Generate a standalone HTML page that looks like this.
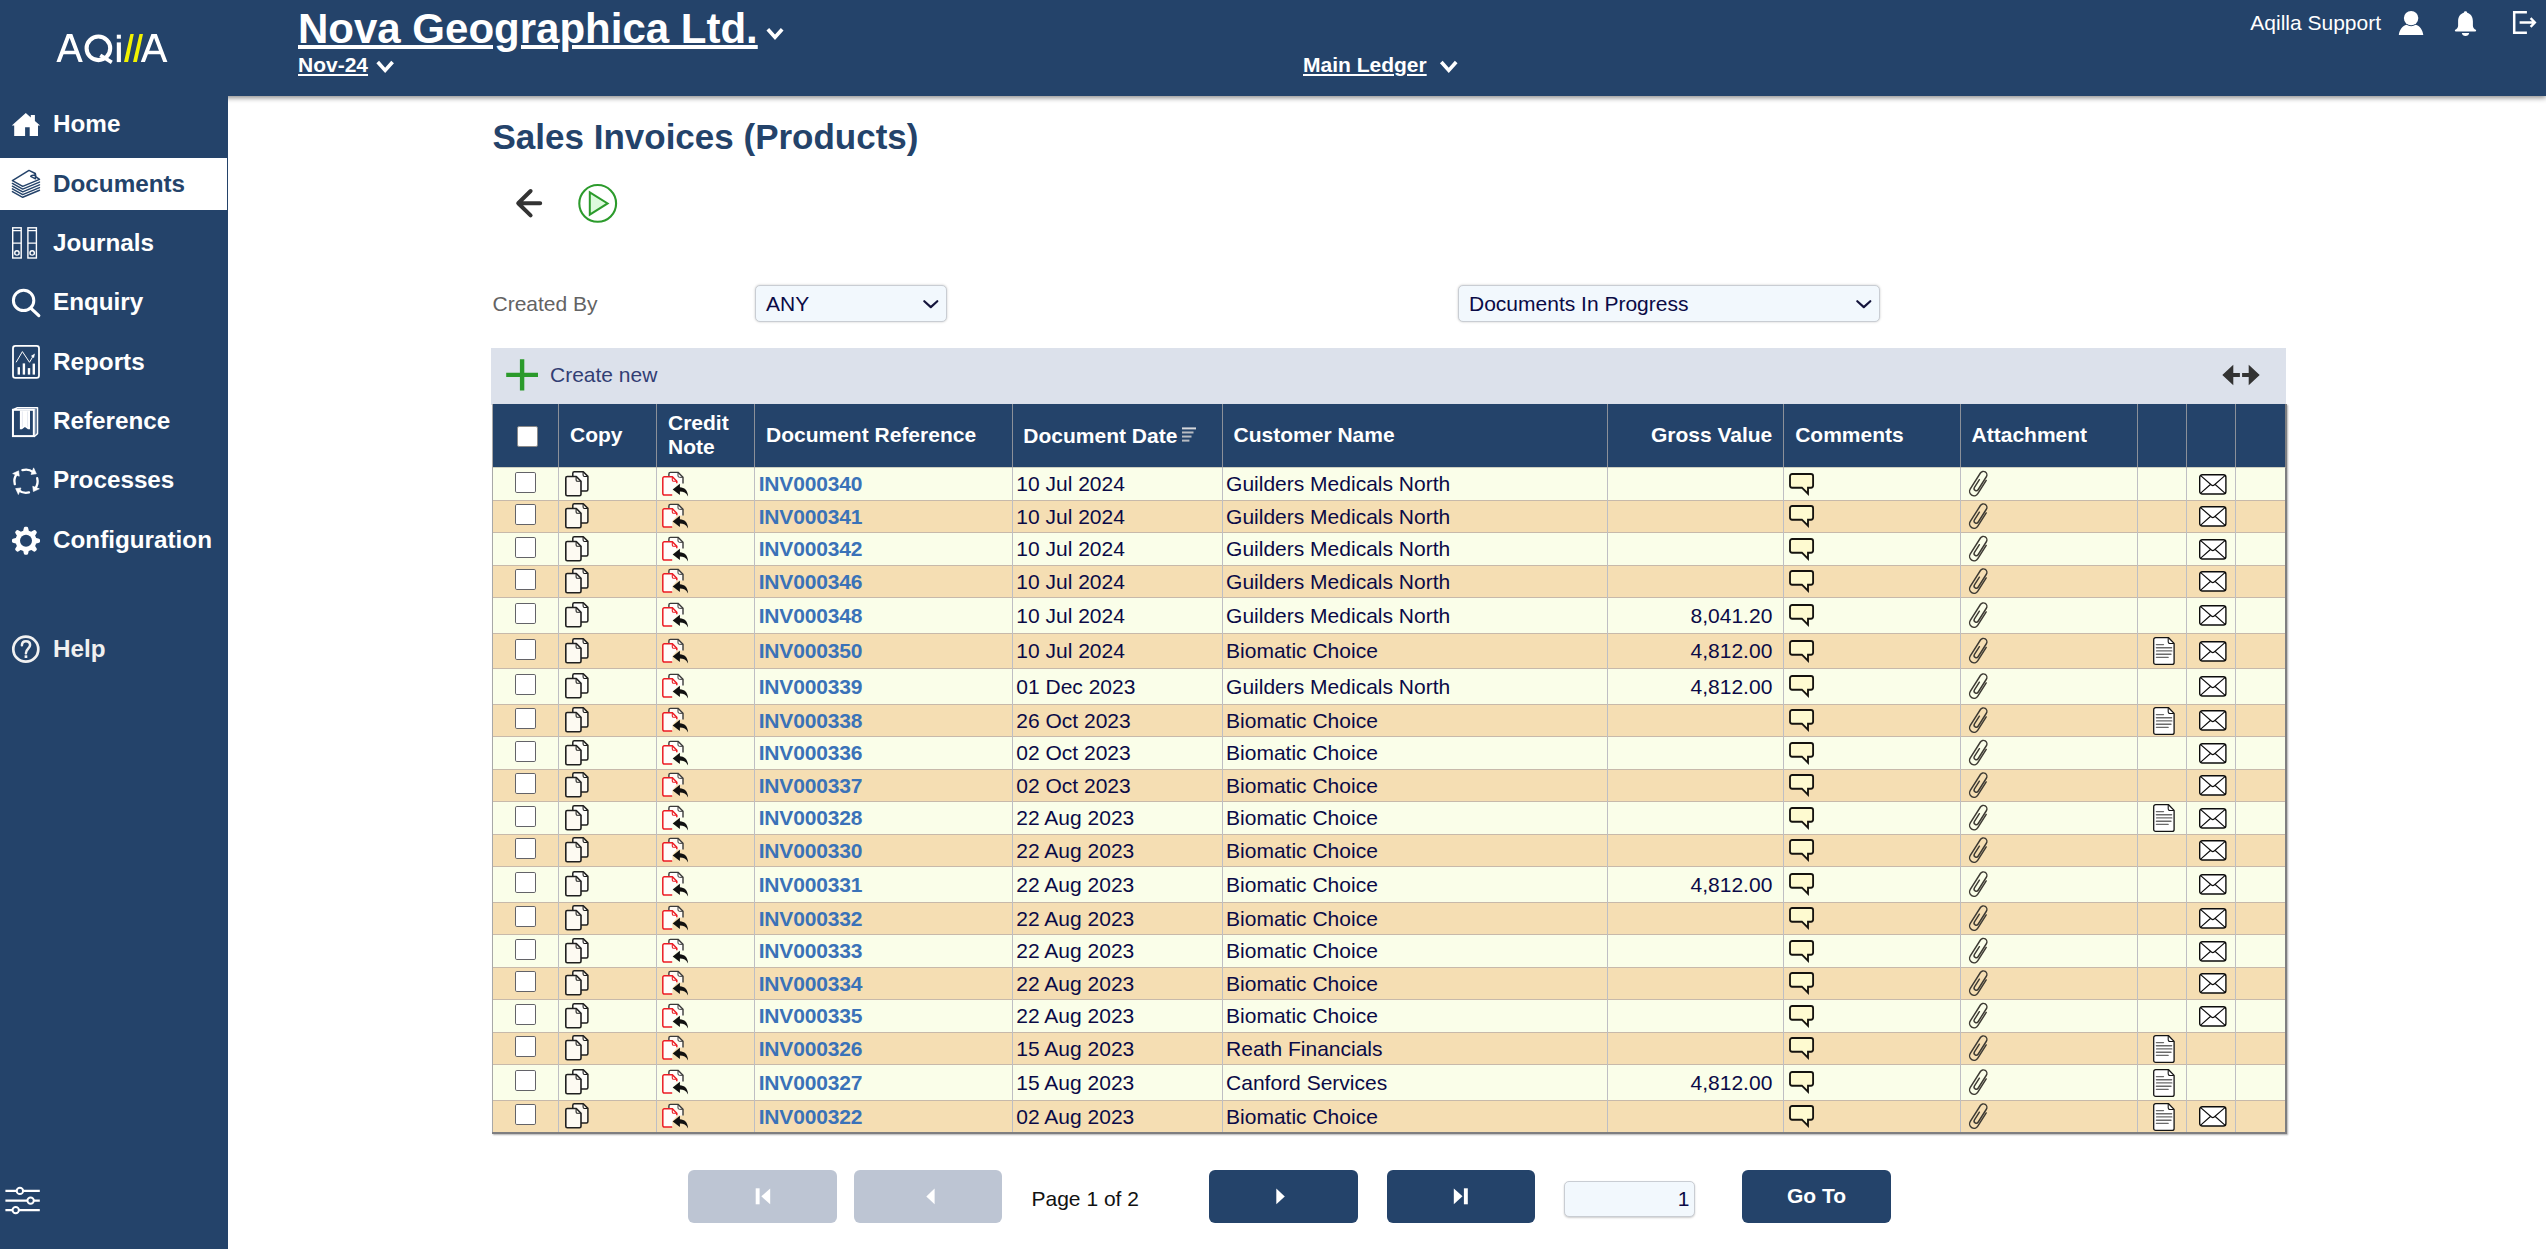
<!DOCTYPE html><html><head><meta charset="utf-8"><title>Sales Invoices (Products)</title><style>
*{box-sizing:border-box;margin:0;padding:0}
html,body{width:2546px;height:1249px;overflow:hidden;background:#fff}
body{font-family:"Liberation Sans",sans-serif;font-size:21px;color:#0a0a46;position:relative}
.abs{position:absolute}
svg{position:absolute;overflow:visible}
#top{position:absolute;left:0;top:0;width:2546px;height:96px;background:#24436a;box-shadow:0 2px 5px rgba(0,0,0,.45)}
#side{position:absolute;left:0;top:0;width:228px;height:1249px;background:#24436a}
.t{position:absolute;white-space:nowrap;line-height:1}
.w{color:#fff}
.b{font-weight:bold}
.u{text-decoration:underline}
.nav{position:absolute;left:53px;font-size:24.25px;font-weight:bold;color:#fff;line-height:1;white-space:nowrap}
.sel{position:absolute;height:36.5px;background:#f2f8fd;border:1px solid #c9cdd3;border-radius:5px;box-shadow:0 0 2.5px rgba(0,0,0,.22)}
.sel span{position:absolute;left:10px;top:7px;line-height:1;color:#0a0a46}
#tb{position:absolute;left:491px;top:348px;width:1795px;height:57px;background:#dce1eb}
#th{position:absolute;left:492px;top:404px;width:1793.5px;height:63px;background:#24436a}
#tbl{position:absolute;left:492px;top:404px;width:1794.6px;height:730px;box-shadow:1px 1px 1.5px rgba(0,0,0,.3)}
.r{position:absolute;left:492px;width:1793.5px}
.r.a{background:#fafee9}
.r.o{background:#f5deb3}
.vl{position:absolute;width:1px;background:#bebec3}
.hl{position:absolute;height:1px;background:#c7b9aa;left:492px;width:1793.5px}
.hd{position:absolute;color:#fff;font-weight:bold;white-space:nowrap;line-height:1}
.c{position:absolute;white-space:nowrap;line-height:1}
.ref{font-weight:bold;color:#3a72b8;letter-spacing:-.17px}
.cb{position:absolute;width:20.7px;height:20.7px;background:#fff;border:1.4px solid #636368;border-radius:1.8px}
.btn{position:absolute;top:1170px;height:52.5px;border-radius:6px;background:#24436a}
.btn.d{background:#bdc5d3}
</style></head><body>
<div id="top"></div>
<div class="t w b u" style="left:298px;top:8px;font-size:42px;text-decoration-thickness:3.9px;text-underline-offset:1.9px">Nova Geographica Ltd.</div>
<svg style="left:0;top:0" width="2546" height="1249" viewBox="0 0 2546 1249"><path d="M767.80 29.20 l7.20 8.00 l7.20 -8.00" fill="none" stroke="#fff" stroke-width="3.6" stroke-linecap="butt" stroke-linejoin="miter"/></svg>
<div class="t w b u" style="left:298px;top:54px;font-size:21px;text-decoration-thickness:1.8px;text-underline-offset:2px">Nov-24</div>
<svg style="left:0;top:0" width="2546" height="1249" viewBox="0 0 2546 1249"><path d="M377.70 62.00 l7.45 8.40 l7.45 -8.40" fill="none" stroke="#fff" stroke-width="3.6" stroke-linecap="butt" stroke-linejoin="miter"/></svg>
<div class="t w b u" style="left:1303px;top:54px;font-size:21px;text-decoration-thickness:1.8px;text-underline-offset:2px">Main Ledger</div>
<svg style="left:0;top:0" width="2546" height="1249" viewBox="0 0 2546 1249"><path d="M1441.30 62.00 l7.45 8.40 l7.45 -8.40" fill="none" stroke="#fff" stroke-width="3.6" stroke-linecap="butt" stroke-linejoin="miter"/></svg>
<div class="t w" style="left:2250.3px;top:12px;font-size:21px">Aqilla Support</div>
<svg style="left:0;top:0" width="2546" height="1249" viewBox="0 0 2546 1249"><circle cx="2411.1" cy="18.1" r="7.2" fill="#fff"/><path d="M2398.8 35.1 C2399.5 29.5 2402.5 26 2406.5 24.8 C2409.3 26.6 2412.9 26.6 2415.7 24.8 C2419.7 26 2422.6 29.5 2423.3 35.1Z" fill="#fff"/></svg>
<svg style="left:0;top:0" width="2546" height="1249" viewBox="0 0 2546 1249"><path d="M2465.5 11.2 c1.1 0 1.7 .6 1.7 1.5 c3.7 1 5.7 4.4 5.7 8.6 v4.4 c0 1.8 1.3 3.2 3.2 4.3 v.6 a1 1 0 0 1 -1 1 h-19.2 a1 1 0 0 1 -1 -1 v-.6 c1.9 -1.1 3.2 -2.5 3.2 -4.3 v-4.4 c0 -4.2 2 -7.6 5.7 -8.6 c0 -.9 .6 -1.5 1.7 -1.5z" fill="#fff"/><path d="M2461.8 33.1 h7.4 c-.3 1.8 -1.7 2.9 -3.7 2.9 s-3.4 -1.1 -3.7 -2.9z" fill="#fff"/></svg>
<svg style="left:0;top:0" width="2546" height="1249" viewBox="0 0 2546 1249"><path d="M2526.9 12.3 H2514.2 V32.8 H2526.9" fill="none" stroke="#fff" stroke-width="2.5"/><path d="M2519.6 22.5 H2534.2 M2530.6 18.1 L2534.9 22.5 L2530.6 26.9" fill="none" stroke="#fff" stroke-width="2.3"/></svg>
<div id="side"></div>
<svg style="left:0;top:0" width="2546" height="1249" viewBox="0 0 2546 1249"><defs><clipPath id="lc"><rect x="50" y="34.1" width="130" height="28"/></clipPath></defs><g clip-path="url(#lc)" fill="none" stroke="#fff" stroke-width="3.9"><path d="M58.1 63 L69.6 32.4 L81.1 63" stroke-linejoin="bevel"/><path d="M142.5 63 L154.1 32.4 L165.7 63" stroke-linejoin="bevel"/></g><path d="M63 52.5 H76.4 M147.4 52.5 H161" stroke="#fff" stroke-width="3.6" fill="none"/><circle cx="98.4" cy="48.3" r="11.8" fill="none" stroke="#fff" stroke-width="4.1"/><path d="M100.3 55.2 L111.8 62.4" stroke="#fff" stroke-width="3.6" fill="none"/><rect x="116.8" y="34.7" width="4.1" height="4" fill="#fff"/><rect x="116.8" y="42.4" width="4.1" height="19.7" fill="#fff"/><path d="M124 62.1 L130.4 34.1 L133.8 34.1 L128.1 62.1Z M133 62.1 L139.5 34.1 L143 34.1 L136.9 62.1Z" fill="#f2f200"/></svg>
<div class="abs" style="left:0;top:157.5px;width:227px;height:52.6px;background:#fff"></div>
<div class="nav" style="top:112px">Home</div>
<div class="nav" style="top:172px;color:#24436a">Documents</div>
<div class="nav" style="top:231px">Journals</div>
<div class="nav" style="top:290px">Enquiry</div>
<div class="nav" style="top:350px">Reports</div>
<div class="nav" style="top:409px">Reference</div>
<div class="nav" style="top:468px">Processes</div>
<div class="nav" style="top:528px">Configuration</div>
<div class="nav" style="top:637px;color:#f0f0f0">Help</div>
<svg style="left:0;top:0" width="2546" height="1249" viewBox="0 0 2546 1249"><path d="M25.8 112.9 L30.8 117.4 V115 H34.9 V121 L40.1 125.6 H38 V136 H29.7 V127.2 H25.1 V136 H14.2 V125.6 H11.8Z" fill="#fff"/><path d="M12.4 191.58 L22.7 197.28 L39.5 190.28" fill="none" stroke="#24436a" stroke-width="1.45" stroke-linejoin="round" stroke-linecap="round"/><path d="M12.4 188.86 L22.7 194.56 L39.5 187.56" fill="none" stroke="#24436a" stroke-width="1.45" stroke-linejoin="round" stroke-linecap="round"/><path d="M12.4 186.14 L22.7 191.84 L39.5 184.84" fill="none" stroke="#24436a" stroke-width="1.45" stroke-linejoin="round" stroke-linecap="round"/><path d="M12.4 183.42 L22.7 189.12 L39.5 182.12" fill="none" stroke="#24436a" stroke-width="1.45" stroke-linejoin="round" stroke-linecap="round"/><path d="M12.4 180.7 L29 170.4 L35.3 173.5 L35.7 176.6 L39.5 179.4 L22.7 186.4Z" fill="#fff" stroke="#24436a" stroke-width="1.5" stroke-linejoin="round"/><path d="M35.3 173.5 L35.5 178.8 L30.7 176.4 C31.2 175.3 32.6 175 35.1 175" fill="none" stroke="#24436a" stroke-width="1.4" stroke-linejoin="round"/><path d="M34.2 173.3 L35.6 173.6 L35.6 175.2Z" fill="#24436a" stroke="#24436a" stroke-width=".8"/><rect x="12.70" y="227.8" width="8.5" height="30.2" fill="none" stroke="#fff" stroke-width="1.4"/><path d="M12.70 230.6 h8.5 M12.70 243.1 h8.5" stroke="#fff" stroke-width="1.3"/><circle cx="16.95" cy="252.9" r="2.2" fill="none" stroke="#fff" stroke-width="1.4"/><rect x="27.90" y="227.8" width="8.5" height="30.2" fill="none" stroke="#fff" stroke-width="1.4"/><path d="M27.90 230.6 h8.5 M27.90 243.1 h8.5" stroke="#fff" stroke-width="1.3"/><circle cx="32.15" cy="252.9" r="2.2" fill="none" stroke="#fff" stroke-width="1.4"/><circle cx="23.6" cy="300.4" r="10.2" fill="none" stroke="#fff" stroke-width="3"/><path d="M31.3 308.6 L38.8 315.6" stroke="#fff" stroke-width="3.2" stroke-linecap="round"/><rect x="13" y="345.9" width="26" height="32" rx="2.4" fill="none" stroke="#fff" stroke-width="1.8"/><path d="M16.1 362.3 L22.4 351.6 L29.5 362.3 L33.4 355.6" fill="none" stroke="#fff" stroke-width="1"/><path d="M34.9 353.6 L34 358 L30.9 356Z" fill="#fff"/><rect x="17.60" y="367.20" width="2.4" height="7.40" fill="#fff"/><rect x="22.70" y="363.40" width="2.4" height="11.20" fill="#fff"/><rect x="27.80" y="368.10" width="2.4" height="6.50" fill="#fff"/><rect x="32.60" y="363.60" width="2.4" height="11.00" fill="#fff"/><path d="M13.2 409.6 L17.4 407.7 H37.5 V433.6 L34 436.8" fill="none" stroke="#fff" stroke-width="1.5" stroke-linejoin="round"/><path d="M17 408.9 H35.8 V434" fill="none" stroke="#9dadc6" stroke-width="1"/><rect x="12.95" y="409.8" width="20.9" height="26.3" fill="#24436a" stroke="#fff" stroke-width="2"/><path d="M19.9 410.4 H30 V429.3 L28 429.3 L24.95 427 L21.9 429.3 L19.9 429.3Z" fill="#fff"/><path d="M22.4 411.5 V427 M27.5 411.5 V427" stroke="#dfe5ee" stroke-width=".8"/><path d="M22.42 470.17 A11.60 11.60 0 0 1 33.14 472.06" fill="none" stroke="#fff" stroke-width="2.3" stroke-linecap="round"/><path d="M36.35 473.80 L33.62 467.87 L31.01 474.46Z" fill="#fff" stroke="#fff" stroke-width=".6" stroke-linejoin="round"/><path d="M37.20 478.20 A11.60 11.60 0 0 1 35.14 488.34" fill="none" stroke="#fff" stroke-width="2.3" stroke-linecap="round"/><path d="M33.40 491.55 L39.33 488.82 L32.74 486.21Z" fill="#fff" stroke="#fff" stroke-width=".6" stroke-linejoin="round"/><path d="M29.00 492.40 A11.60 11.60 0 0 1 18.86 490.34" fill="none" stroke="#fff" stroke-width="2.3" stroke-linecap="round"/><path d="M15.65 488.60 L18.38 494.53 L20.99 487.94Z" fill="#fff" stroke="#fff" stroke-width=".6" stroke-linejoin="round"/><path d="M14.80 484.20 A11.60 11.60 0 0 1 16.86 474.06" fill="none" stroke="#fff" stroke-width="2.3" stroke-linecap="round"/><path d="M18.60 470.85 L12.67 473.58 L19.26 476.19Z" fill="#fff" stroke="#fff" stroke-width=".6" stroke-linejoin="round"/><path d="M24.34 531.65 L25.24 528.12 L26.76 528.12 L27.66 531.65 L31.29 533.15 L34.43 531.30 L35.50 532.37 L33.65 535.51 L35.15 539.14 L38.68 540.04 L38.68 541.56 L35.15 542.46 L33.65 546.09 L35.50 549.23 L34.43 550.30 L31.29 548.45 L27.66 549.95 L26.76 553.48 L25.24 553.48 L24.34 549.95 L20.71 548.45 L17.57 550.30 L16.50 549.23 L18.35 546.09 L16.85 542.46 L13.32 541.56 L13.32 540.04 L16.85 539.14 L18.35 535.51 L16.50 532.37 L17.57 531.30 L20.71 533.15Z" fill="#fff" stroke="#fff" stroke-width="2.7" stroke-linejoin="round"/><circle cx="26.00" cy="540.80" r="6" fill="#24436a"/><circle cx="25.8" cy="649.2" r="12.5" fill="none" stroke="#f1f1f1" stroke-width="2.7"/><path d="M21.9 645.2 C22 642.7 23.6 641.2 25.9 641.2 C28.4 641.2 30.1 642.7 30.1 645 C30.1 648.5 25.9 648.9 25.9 653.2" fill="none" stroke="#f1f1f1" stroke-width="2.5" stroke-linecap="round"/><rect x="24.6" y="655.3" width="2.7" height="2.7" fill="#f1f1f1"/><path d="M5.4 1190.90 H39.8" stroke="#fff" stroke-width="2.2" stroke-linecap="butt"/><circle cx="19.90" cy="1190.90" r="3.2" fill="#24436a" stroke="#fff" stroke-width="2"/><path d="M5.4 1200.60 H39.8" stroke="#fff" stroke-width="2.2" stroke-linecap="butt"/><circle cx="30.60" cy="1200.60" r="3.2" fill="#24436a" stroke="#fff" stroke-width="2"/><path d="M5.4 1210.10 H39.8" stroke="#fff" stroke-width="2.2" stroke-linecap="butt"/><circle cx="15.70" cy="1210.10" r="3.2" fill="#24436a" stroke="#fff" stroke-width="2"/></svg>
<div class="t b" style="left:492.5px;top:119.00px;font-size:35px;color:#24436a">Sales Invoices (Products)</div>
<svg style="left:0;top:0" width="2546" height="1249" viewBox="0 0 2546 1249"><path d="M540.2 203.2 H519 M530.6 191 L518.2 203.2 L530.6 215.4" fill="none" stroke="#333" stroke-width="4" stroke-linecap="round" stroke-linejoin="round"/></svg>
<svg style="left:0;top:0" width="2546" height="1249" viewBox="0 0 2546 1249"><circle cx="597.7" cy="203.4" r="18.4" fill="#fff" stroke="#2c9b2c" stroke-width="2.1"/><path d="M589.8 192.3 L607.6 203.4 L589.8 214.6Z" fill="#dcfadc" stroke="#2c9b2c" stroke-width="2" stroke-linejoin="miter"/></svg>
<div class="t" style="left:492.5px;top:293.00px;color:#636363">Created By</div>
<div class="sel" style="left:755px;top:285px;width:191.8px"><span>ANY</span></div>
<svg style="left:0;top:0" width="2546" height="1249" viewBox="0 0 2546 1249"><path d="M924.30 301.20 l6.5 5.9 l6.5 -5.9" fill="none" stroke="#15153c" stroke-width="2.2" stroke-linecap="round" stroke-linejoin="round"/></svg>
<div class="sel" style="left:1458px;top:285px;width:422px"><span>Documents In Progress</span></div>
<svg style="left:0;top:0" width="2546" height="1249" viewBox="0 0 2546 1249"><path d="M1857.30 301.20 l6.5 5.9 l6.5 -5.9" fill="none" stroke="#15153c" stroke-width="2.2" stroke-linecap="round" stroke-linejoin="round"/></svg>
<div id="tb"></div>
<svg style="left:0;top:0" width="2546" height="1249" viewBox="0 0 2546 1249"><path d="M506.2 374.9 H538 M522.1 359.3 V390.5" stroke="#2b9a2b" stroke-width="4.4" stroke-linecap="butt"/></svg>
<div class="t" style="left:550px;top:364.00px;color:#323e74">Create new</div>
<svg style="left:0;top:0" width="2546" height="1249" viewBox="0 0 2546 1249"><path d="M2222.3 375 L2233.3 364.8 V372.9 H2248.7 V364.8 L2259.7 375 L2248.7 385.2 V377.1 H2233.3 V385.2Z" fill="#333"/><rect x="2239.9" y="371" width="2.2" height="8" fill="#dce1eb"/></svg>
<div id="tbl"></div>
<div id="th"></div>
<div class="r a" style="top:467px;height:33px"></div>
<div class="r o" style="top:500px;height:32px"></div>
<div class="r a" style="top:532px;height:33px"></div>
<div class="r o" style="top:565px;height:32px"></div>
<div class="r a" style="top:597px;height:36px"></div>
<div class="r o" style="top:633px;height:35px"></div>
<div class="r a" style="top:668px;height:36px"></div>
<div class="r o" style="top:704px;height:32px"></div>
<div class="r a" style="top:736px;height:33px"></div>
<div class="r o" style="top:769px;height:32px"></div>
<div class="r a" style="top:801px;height:33px"></div>
<div class="r o" style="top:834px;height:32px"></div>
<div class="r a" style="top:866px;height:36px"></div>
<div class="r o" style="top:902px;height:32px"></div>
<div class="r a" style="top:934px;height:33px"></div>
<div class="r o" style="top:967px;height:32px"></div>
<div class="r a" style="top:999px;height:33px"></div>
<div class="r o" style="top:1032px;height:32px"></div>
<div class="r a" style="top:1064px;height:36px"></div>
<div class="r o" style="top:1100px;height:32px"></div>
<div class="hl" style="top:500px"></div>
<div class="hl" style="top:532px"></div>
<div class="hl" style="top:565px"></div>
<div class="hl" style="top:597px"></div>
<div class="hl" style="top:633px"></div>
<div class="hl" style="top:668px"></div>
<div class="hl" style="top:704px"></div>
<div class="hl" style="top:736px"></div>
<div class="hl" style="top:769px"></div>
<div class="hl" style="top:801px"></div>
<div class="hl" style="top:834px"></div>
<div class="hl" style="top:866px"></div>
<div class="hl" style="top:902px"></div>
<div class="hl" style="top:934px"></div>
<div class="hl" style="top:967px"></div>
<div class="hl" style="top:999px"></div>
<div class="hl" style="top:1032px"></div>
<div class="hl" style="top:1064px"></div>
<div class="hl" style="top:1100px"></div>
<div class="vl" style="left:558px;top:404px;height:728px"></div>
<div class="vl" style="left:656px;top:404px;height:728px"></div>
<div class="vl" style="left:754px;top:404px;height:728px"></div>
<div class="vl" style="left:1012px;top:404px;height:728px"></div>
<div class="vl" style="left:1222px;top:404px;height:728px"></div>
<div class="vl" style="left:1607px;top:404px;height:728px"></div>
<div class="vl" style="left:1783px;top:404px;height:728px"></div>
<div class="vl" style="left:1960px;top:404px;height:728px"></div>
<div class="vl" style="left:2137px;top:404px;height:728px"></div>
<div class="vl" style="left:2186px;top:404px;height:728px"></div>
<div class="vl" style="left:2235px;top:404px;height:728px"></div>
<div class="vl" style="left:557.8px;top:404px;height:63px;background:#8b9099;width:1.7px"></div>
<div class="vl" style="left:655.8px;top:404px;height:63px;background:#8b9099;width:1.7px"></div>
<div class="vl" style="left:753.8px;top:404px;height:63px;background:#8b9099;width:1.7px"></div>
<div class="vl" style="left:1011.8px;top:404px;height:63px;background:#8b9099;width:1.7px"></div>
<div class="vl" style="left:1221.8px;top:404px;height:63px;background:#8b9099;width:1.7px"></div>
<div class="vl" style="left:1606.8px;top:404px;height:63px;background:#8b9099;width:1.7px"></div>
<div class="vl" style="left:1782.8px;top:404px;height:63px;background:#8b9099;width:1.7px"></div>
<div class="vl" style="left:1959.8px;top:404px;height:63px;background:#8b9099;width:1.7px"></div>
<div class="vl" style="left:2136.8px;top:404px;height:63px;background:#8b9099;width:1.7px"></div>
<div class="vl" style="left:2185.8px;top:404px;height:63px;background:#8b9099;width:1.7px"></div>
<div class="vl" style="left:2234.8px;top:404px;height:63px;background:#8b9099;width:1.7px"></div>
<div class="vl" style="left:492px;top:404px;height:729px;background:#a8a8a8;width:1px"></div>
<div class="vl" style="left:2284.5px;top:404px;height:730px;background:#7e7e80;width:2.1px"></div>
<div class="hl" style="top:1132.2px;background:#7e7e80;height:1.9px;width:1794.5px"></div>
<div class="hl" style="top:466.5px;background:rgba(170,170,160,.55)"></div>
<div class="abs" style="left:517.2px;top:426.3px;width:21px;height:20.8px;background:#fff;border:1px solid #8a8a8a;border-radius:2px"></div>
<div class="hd" style="left:570.00px;top:424.00px">Copy</div>
<div class="hd" style="left:668.00px;top:412.00px">Credit</div>
<div class="hd" style="left:668.00px;top:436.00px">Note</div>
<div class="hd" style="left:766.00px;top:424.00px">Document Reference</div>
<div class="hd" style="left:1023.30px;top:425.00px">Document Date</div>
<svg style="left:0;top:0" width="2546" height="1249" viewBox="0 0 2546 1249"><rect x="1182" y="427.40" width="14.00" height="2" fill="#d6d8dc"/><rect x="1182" y="431.47" width="11.50" height="2" fill="#b9bcc2"/><rect x="1182" y="435.54" width="9.50" height="2" fill="#b9bcc2"/><rect x="1182" y="439.61" width="7.40" height="2" fill="#b9bcc2"/></svg>
<div class="hd" style="left:1233.60px;top:424.00px">Customer Name</div>
<div class="hd" style="right:773.70px;top:424.00px">Gross Value</div>
<div class="hd" style="left:1795.20px;top:424.00px">Comments</div>
<div class="hd" style="left:1971.60px;top:424.00px">Attachment</div>
<div class="cb" style="left:515.2px;top:472.10px"></div>
<svg style="left:565.20px;top:471.20px" width="24" height="26" viewBox="0 0 24 26"><path d="M9.3 .8 H18.3 L22.9 5.4 V18.4 a1.5 1.5 0 0 1 -1.5 1.5 H9.3 a1.5 1.5 0 0 1 -1.5 -1.5 V2.3 a1.5 1.5 0 0 1 1.5 -1.5Z" fill="rgba(255,255,255,.82)" stroke="#1f1f1f" stroke-width="1.5" stroke-linejoin="round"/><path d="M18.1 1 V4.1 a1.4 1.4 0 0 0 1.4 1.4 H22.7" fill="none" stroke="#1f1f1f" stroke-width="1.1"/><path d="M2.3 5.5 H11.3 L16 10.2 V23.3 a1.5 1.5 0 0 1 -1.5 1.5 H2.3 a1.5 1.5 0 0 1 -1.5 -1.5 V7 a1.5 1.5 0 0 1 1.5 -1.5Z" fill="#fdfaf2" stroke="#1f1f1f" stroke-width="1.6" stroke-linejoin="round"/><path d="M11.1 5.7 V8.9 a1.4 1.4 0 0 0 1.4 1.4 H15.8" fill="none" stroke="#1f1f1f" stroke-width="1.1"/></svg>
<svg style="left:662.00px;top:471.00px" width="27" height="26" viewBox="0 0 27 26"><path d="M6.9 5.4 V2.9 a1.5 1.5 0 0 1 1.5 -1.5 H16.2 L21 6.2 V12.6 H12 Z" fill="rgba(255,255,255,.85)" stroke="none"/><path d="M6.9 5.2 V2.9 a1.5 1.5 0 0 1 1.5 -1.5 H16.2 L21 6.2 V12.6" fill="none" stroke="#3a3a3a" stroke-width="1.4"/><path d="M16 1.6 V4.9 a1.4 1.4 0 0 0 1.4 1.4 H20.8" fill="none" stroke="#3a3a3a" stroke-width="1"/><path d="M10.4 24.1 H2.3 a1.5 1.5 0 0 1 -1.5 -1.5 V7.3 a1.5 1.5 0 0 1 1.5 -1.5 H10.4 L14.8 10.2 V13 L10.4 18 Z" fill="#fffdfb" stroke="none"/><path d="M10.2 24.1 H2.3 a1.5 1.5 0 0 1 -1.5 -1.5 V7.3 a1.5 1.5 0 0 1 1.5 -1.5 H10.4 L14.8 10.2 V12.2" fill="none" stroke="#ec1c24" stroke-width="1.5"/><path d="M10.3 6 V8.9 a1.4 1.4 0 0 0 1.4 1.4 H14.6" fill="none" stroke="#ec1c24" stroke-width="1.1"/><path d="M10.7 18.4 L17.9 12.7 V16.2 C22.4 16.4 25.8 19.2 26.1 25.4 C24.2 21.8 21.6 20.6 17.9 20.6 V24.1Z" fill="#111"/></svg>
<div class="c ref" style="left:758.7px;top:473px">INV000340</div>
<div class="c" style="left:1016.3px;top:473px">10 Jul 2024</div>
<div class="c" style="left:1226.1px;top:473px">Guilders Medicals North</div>
<svg style="left:1789.00px;top:473.00px" width="26" height="24" viewBox="0 0 26 24"><path d="M3.2 1 H21.9 a2.2 2.2 0 0 1 2.2 2.2 V12.5 a2.2 2.2 0 0 1 -2.2 2.2 H19 V20.7 L12.9 14.7 H3.2 a2.2 2.2 0 0 1 -2.2 -2.2 V3.2 a2.2 2.2 0 0 1 2.2 -2.2Z" fill="#fefad0" stroke="#15130f" stroke-width="1.85" stroke-linejoin="miter"/></svg>
<svg style="left:0;top:0" width="2546" height="1249" viewBox="0 0 2546 1249"><path transform="translate(1977.00 478.40) rotate(32.4)" d="M2.7 -.2 V9.0 A2.15 2.15 0 0 0 7.0 9.0 V-6.4 A3.5 3.5 0 0 0 0 -6.4 V12.5 A4.45 4.45 0 0 0 8.9 12.5 V-3.2" fill="none" stroke="#3d3a33" stroke-width="1.45" stroke-linecap="round"/></svg>
<svg style="left:2199.10px;top:474.05px" width="28" height="21" viewBox="0 0 28 21"><rect x=".7" y=".7" width="26.2" height="19.3" rx="2.6" fill="#fff" stroke="#0c0c0c" stroke-width="1.4"/><path d="M1.4 1.4 L12.4 11 Q13.8 12.2 15.2 11 L26.2 1.4 M1.4 19.4 L11.4 10.5 M26.2 19.4 L16.2 10.5" fill="none" stroke="#0c0c0c" stroke-width="1.15"/></svg>
<div class="cb" style="left:515.2px;top:504.10px"></div>
<svg style="left:565.20px;top:503.20px" width="24" height="26" viewBox="0 0 24 26"><path d="M9.3 .8 H18.3 L22.9 5.4 V18.4 a1.5 1.5 0 0 1 -1.5 1.5 H9.3 a1.5 1.5 0 0 1 -1.5 -1.5 V2.3 a1.5 1.5 0 0 1 1.5 -1.5Z" fill="rgba(255,255,255,.82)" stroke="#1f1f1f" stroke-width="1.5" stroke-linejoin="round"/><path d="M18.1 1 V4.1 a1.4 1.4 0 0 0 1.4 1.4 H22.7" fill="none" stroke="#1f1f1f" stroke-width="1.1"/><path d="M2.3 5.5 H11.3 L16 10.2 V23.3 a1.5 1.5 0 0 1 -1.5 1.5 H2.3 a1.5 1.5 0 0 1 -1.5 -1.5 V7 a1.5 1.5 0 0 1 1.5 -1.5Z" fill="#fdfaf2" stroke="#1f1f1f" stroke-width="1.6" stroke-linejoin="round"/><path d="M11.1 5.7 V8.9 a1.4 1.4 0 0 0 1.4 1.4 H15.8" fill="none" stroke="#1f1f1f" stroke-width="1.1"/></svg>
<svg style="left:662.00px;top:503.00px" width="27" height="26" viewBox="0 0 27 26"><path d="M6.9 5.4 V2.9 a1.5 1.5 0 0 1 1.5 -1.5 H16.2 L21 6.2 V12.6 H12 Z" fill="rgba(255,255,255,.85)" stroke="none"/><path d="M6.9 5.2 V2.9 a1.5 1.5 0 0 1 1.5 -1.5 H16.2 L21 6.2 V12.6" fill="none" stroke="#3a3a3a" stroke-width="1.4"/><path d="M16 1.6 V4.9 a1.4 1.4 0 0 0 1.4 1.4 H20.8" fill="none" stroke="#3a3a3a" stroke-width="1"/><path d="M10.4 24.1 H2.3 a1.5 1.5 0 0 1 -1.5 -1.5 V7.3 a1.5 1.5 0 0 1 1.5 -1.5 H10.4 L14.8 10.2 V13 L10.4 18 Z" fill="#fffdfb" stroke="none"/><path d="M10.2 24.1 H2.3 a1.5 1.5 0 0 1 -1.5 -1.5 V7.3 a1.5 1.5 0 0 1 1.5 -1.5 H10.4 L14.8 10.2 V12.2" fill="none" stroke="#ec1c24" stroke-width="1.5"/><path d="M10.3 6 V8.9 a1.4 1.4 0 0 0 1.4 1.4 H14.6" fill="none" stroke="#ec1c24" stroke-width="1.1"/><path d="M10.7 18.4 L17.9 12.7 V16.2 C22.4 16.4 25.8 19.2 26.1 25.4 C24.2 21.8 21.6 20.6 17.9 20.6 V24.1Z" fill="#111"/></svg>
<div class="c ref" style="left:758.7px;top:506px">INV000341</div>
<div class="c" style="left:1016.3px;top:506px">10 Jul 2024</div>
<div class="c" style="left:1226.1px;top:506px">Guilders Medicals North</div>
<svg style="left:1789.00px;top:505.00px" width="26" height="24" viewBox="0 0 26 24"><path d="M3.2 1 H21.9 a2.2 2.2 0 0 1 2.2 2.2 V12.5 a2.2 2.2 0 0 1 -2.2 2.2 H19 V20.7 L12.9 14.7 H3.2 a2.2 2.2 0 0 1 -2.2 -2.2 V3.2 a2.2 2.2 0 0 1 2.2 -2.2Z" fill="#fefad0" stroke="#15130f" stroke-width="1.85" stroke-linejoin="miter"/></svg>
<svg style="left:0;top:0" width="2546" height="1249" viewBox="0 0 2546 1249"><path transform="translate(1977.00 510.90) rotate(32.4)" d="M2.7 -.2 V9.0 A2.15 2.15 0 0 0 7.0 9.0 V-6.4 A3.5 3.5 0 0 0 0 -6.4 V12.5 A4.45 4.45 0 0 0 8.9 12.5 V-3.2" fill="none" stroke="#3d3a33" stroke-width="1.45" stroke-linecap="round"/></svg>
<svg style="left:2199.10px;top:506.05px" width="28" height="21" viewBox="0 0 28 21"><rect x=".7" y=".7" width="26.2" height="19.3" rx="2.6" fill="#fff" stroke="#0c0c0c" stroke-width="1.4"/><path d="M1.4 1.4 L12.4 11 Q13.8 12.2 15.2 11 L26.2 1.4 M1.4 19.4 L11.4 10.5 M26.2 19.4 L16.2 10.5" fill="none" stroke="#0c0c0c" stroke-width="1.15"/></svg>
<div class="cb" style="left:515.2px;top:537.10px"></div>
<svg style="left:565.20px;top:536.20px" width="24" height="26" viewBox="0 0 24 26"><path d="M9.3 .8 H18.3 L22.9 5.4 V18.4 a1.5 1.5 0 0 1 -1.5 1.5 H9.3 a1.5 1.5 0 0 1 -1.5 -1.5 V2.3 a1.5 1.5 0 0 1 1.5 -1.5Z" fill="rgba(255,255,255,.82)" stroke="#1f1f1f" stroke-width="1.5" stroke-linejoin="round"/><path d="M18.1 1 V4.1 a1.4 1.4 0 0 0 1.4 1.4 H22.7" fill="none" stroke="#1f1f1f" stroke-width="1.1"/><path d="M2.3 5.5 H11.3 L16 10.2 V23.3 a1.5 1.5 0 0 1 -1.5 1.5 H2.3 a1.5 1.5 0 0 1 -1.5 -1.5 V7 a1.5 1.5 0 0 1 1.5 -1.5Z" fill="#fdfaf2" stroke="#1f1f1f" stroke-width="1.6" stroke-linejoin="round"/><path d="M11.1 5.7 V8.9 a1.4 1.4 0 0 0 1.4 1.4 H15.8" fill="none" stroke="#1f1f1f" stroke-width="1.1"/></svg>
<svg style="left:662.00px;top:536.00px" width="27" height="26" viewBox="0 0 27 26"><path d="M6.9 5.4 V2.9 a1.5 1.5 0 0 1 1.5 -1.5 H16.2 L21 6.2 V12.6 H12 Z" fill="rgba(255,255,255,.85)" stroke="none"/><path d="M6.9 5.2 V2.9 a1.5 1.5 0 0 1 1.5 -1.5 H16.2 L21 6.2 V12.6" fill="none" stroke="#3a3a3a" stroke-width="1.4"/><path d="M16 1.6 V4.9 a1.4 1.4 0 0 0 1.4 1.4 H20.8" fill="none" stroke="#3a3a3a" stroke-width="1"/><path d="M10.4 24.1 H2.3 a1.5 1.5 0 0 1 -1.5 -1.5 V7.3 a1.5 1.5 0 0 1 1.5 -1.5 H10.4 L14.8 10.2 V13 L10.4 18 Z" fill="#fffdfb" stroke="none"/><path d="M10.2 24.1 H2.3 a1.5 1.5 0 0 1 -1.5 -1.5 V7.3 a1.5 1.5 0 0 1 1.5 -1.5 H10.4 L14.8 10.2 V12.2" fill="none" stroke="#ec1c24" stroke-width="1.5"/><path d="M10.3 6 V8.9 a1.4 1.4 0 0 0 1.4 1.4 H14.6" fill="none" stroke="#ec1c24" stroke-width="1.1"/><path d="M10.7 18.4 L17.9 12.7 V16.2 C22.4 16.4 25.8 19.2 26.1 25.4 C24.2 21.8 21.6 20.6 17.9 20.6 V24.1Z" fill="#111"/></svg>
<div class="c ref" style="left:758.7px;top:538px">INV000342</div>
<div class="c" style="left:1016.3px;top:538px">10 Jul 2024</div>
<div class="c" style="left:1226.1px;top:538px">Guilders Medicals North</div>
<svg style="left:1789.00px;top:538.00px" width="26" height="24" viewBox="0 0 26 24"><path d="M3.2 1 H21.9 a2.2 2.2 0 0 1 2.2 2.2 V12.5 a2.2 2.2 0 0 1 -2.2 2.2 H19 V20.7 L12.9 14.7 H3.2 a2.2 2.2 0 0 1 -2.2 -2.2 V3.2 a2.2 2.2 0 0 1 2.2 -2.2Z" fill="#fefad0" stroke="#15130f" stroke-width="1.85" stroke-linejoin="miter"/></svg>
<svg style="left:0;top:0" width="2546" height="1249" viewBox="0 0 2546 1249"><path transform="translate(1977.00 543.40) rotate(32.4)" d="M2.7 -.2 V9.0 A2.15 2.15 0 0 0 7.0 9.0 V-6.4 A3.5 3.5 0 0 0 0 -6.4 V12.5 A4.45 4.45 0 0 0 8.9 12.5 V-3.2" fill="none" stroke="#3d3a33" stroke-width="1.45" stroke-linecap="round"/></svg>
<svg style="left:2199.10px;top:539.05px" width="28" height="21" viewBox="0 0 28 21"><rect x=".7" y=".7" width="26.2" height="19.3" rx="2.6" fill="#fff" stroke="#0c0c0c" stroke-width="1.4"/><path d="M1.4 1.4 L12.4 11 Q13.8 12.2 15.2 11 L26.2 1.4 M1.4 19.4 L11.4 10.5 M26.2 19.4 L16.2 10.5" fill="none" stroke="#0c0c0c" stroke-width="1.15"/></svg>
<div class="cb" style="left:515.2px;top:569.10px"></div>
<svg style="left:565.20px;top:568.20px" width="24" height="26" viewBox="0 0 24 26"><path d="M9.3 .8 H18.3 L22.9 5.4 V18.4 a1.5 1.5 0 0 1 -1.5 1.5 H9.3 a1.5 1.5 0 0 1 -1.5 -1.5 V2.3 a1.5 1.5 0 0 1 1.5 -1.5Z" fill="rgba(255,255,255,.82)" stroke="#1f1f1f" stroke-width="1.5" stroke-linejoin="round"/><path d="M18.1 1 V4.1 a1.4 1.4 0 0 0 1.4 1.4 H22.7" fill="none" stroke="#1f1f1f" stroke-width="1.1"/><path d="M2.3 5.5 H11.3 L16 10.2 V23.3 a1.5 1.5 0 0 1 -1.5 1.5 H2.3 a1.5 1.5 0 0 1 -1.5 -1.5 V7 a1.5 1.5 0 0 1 1.5 -1.5Z" fill="#fdfaf2" stroke="#1f1f1f" stroke-width="1.6" stroke-linejoin="round"/><path d="M11.1 5.7 V8.9 a1.4 1.4 0 0 0 1.4 1.4 H15.8" fill="none" stroke="#1f1f1f" stroke-width="1.1"/></svg>
<svg style="left:662.00px;top:568.00px" width="27" height="26" viewBox="0 0 27 26"><path d="M6.9 5.4 V2.9 a1.5 1.5 0 0 1 1.5 -1.5 H16.2 L21 6.2 V12.6 H12 Z" fill="rgba(255,255,255,.85)" stroke="none"/><path d="M6.9 5.2 V2.9 a1.5 1.5 0 0 1 1.5 -1.5 H16.2 L21 6.2 V12.6" fill="none" stroke="#3a3a3a" stroke-width="1.4"/><path d="M16 1.6 V4.9 a1.4 1.4 0 0 0 1.4 1.4 H20.8" fill="none" stroke="#3a3a3a" stroke-width="1"/><path d="M10.4 24.1 H2.3 a1.5 1.5 0 0 1 -1.5 -1.5 V7.3 a1.5 1.5 0 0 1 1.5 -1.5 H10.4 L14.8 10.2 V13 L10.4 18 Z" fill="#fffdfb" stroke="none"/><path d="M10.2 24.1 H2.3 a1.5 1.5 0 0 1 -1.5 -1.5 V7.3 a1.5 1.5 0 0 1 1.5 -1.5 H10.4 L14.8 10.2 V12.2" fill="none" stroke="#ec1c24" stroke-width="1.5"/><path d="M10.3 6 V8.9 a1.4 1.4 0 0 0 1.4 1.4 H14.6" fill="none" stroke="#ec1c24" stroke-width="1.1"/><path d="M10.7 18.4 L17.9 12.7 V16.2 C22.4 16.4 25.8 19.2 26.1 25.4 C24.2 21.8 21.6 20.6 17.9 20.6 V24.1Z" fill="#111"/></svg>
<div class="c ref" style="left:758.7px;top:571px">INV000346</div>
<div class="c" style="left:1016.3px;top:571px">10 Jul 2024</div>
<div class="c" style="left:1226.1px;top:571px">Guilders Medicals North</div>
<svg style="left:1789.00px;top:570.00px" width="26" height="24" viewBox="0 0 26 24"><path d="M3.2 1 H21.9 a2.2 2.2 0 0 1 2.2 2.2 V12.5 a2.2 2.2 0 0 1 -2.2 2.2 H19 V20.7 L12.9 14.7 H3.2 a2.2 2.2 0 0 1 -2.2 -2.2 V3.2 a2.2 2.2 0 0 1 2.2 -2.2Z" fill="#fefad0" stroke="#15130f" stroke-width="1.85" stroke-linejoin="miter"/></svg>
<svg style="left:0;top:0" width="2546" height="1249" viewBox="0 0 2546 1249"><path transform="translate(1977.00 575.90) rotate(32.4)" d="M2.7 -.2 V9.0 A2.15 2.15 0 0 0 7.0 9.0 V-6.4 A3.5 3.5 0 0 0 0 -6.4 V12.5 A4.45 4.45 0 0 0 8.9 12.5 V-3.2" fill="none" stroke="#3d3a33" stroke-width="1.45" stroke-linecap="round"/></svg>
<svg style="left:2199.10px;top:571.05px" width="28" height="21" viewBox="0 0 28 21"><rect x=".7" y=".7" width="26.2" height="19.3" rx="2.6" fill="#fff" stroke="#0c0c0c" stroke-width="1.4"/><path d="M1.4 1.4 L12.4 11 Q13.8 12.2 15.2 11 L26.2 1.4 M1.4 19.4 L11.4 10.5 M26.2 19.4 L16.2 10.5" fill="none" stroke="#0c0c0c" stroke-width="1.15"/></svg>
<div class="cb" style="left:515.2px;top:603.10px"></div>
<svg style="left:565.20px;top:602.20px" width="24" height="26" viewBox="0 0 24 26"><path d="M9.3 .8 H18.3 L22.9 5.4 V18.4 a1.5 1.5 0 0 1 -1.5 1.5 H9.3 a1.5 1.5 0 0 1 -1.5 -1.5 V2.3 a1.5 1.5 0 0 1 1.5 -1.5Z" fill="rgba(255,255,255,.82)" stroke="#1f1f1f" stroke-width="1.5" stroke-linejoin="round"/><path d="M18.1 1 V4.1 a1.4 1.4 0 0 0 1.4 1.4 H22.7" fill="none" stroke="#1f1f1f" stroke-width="1.1"/><path d="M2.3 5.5 H11.3 L16 10.2 V23.3 a1.5 1.5 0 0 1 -1.5 1.5 H2.3 a1.5 1.5 0 0 1 -1.5 -1.5 V7 a1.5 1.5 0 0 1 1.5 -1.5Z" fill="#fdfaf2" stroke="#1f1f1f" stroke-width="1.6" stroke-linejoin="round"/><path d="M11.1 5.7 V8.9 a1.4 1.4 0 0 0 1.4 1.4 H15.8" fill="none" stroke="#1f1f1f" stroke-width="1.1"/></svg>
<svg style="left:662.00px;top:602.00px" width="27" height="26" viewBox="0 0 27 26"><path d="M6.9 5.4 V2.9 a1.5 1.5 0 0 1 1.5 -1.5 H16.2 L21 6.2 V12.6 H12 Z" fill="rgba(255,255,255,.85)" stroke="none"/><path d="M6.9 5.2 V2.9 a1.5 1.5 0 0 1 1.5 -1.5 H16.2 L21 6.2 V12.6" fill="none" stroke="#3a3a3a" stroke-width="1.4"/><path d="M16 1.6 V4.9 a1.4 1.4 0 0 0 1.4 1.4 H20.8" fill="none" stroke="#3a3a3a" stroke-width="1"/><path d="M10.4 24.1 H2.3 a1.5 1.5 0 0 1 -1.5 -1.5 V7.3 a1.5 1.5 0 0 1 1.5 -1.5 H10.4 L14.8 10.2 V13 L10.4 18 Z" fill="#fffdfb" stroke="none"/><path d="M10.2 24.1 H2.3 a1.5 1.5 0 0 1 -1.5 -1.5 V7.3 a1.5 1.5 0 0 1 1.5 -1.5 H10.4 L14.8 10.2 V12.2" fill="none" stroke="#ec1c24" stroke-width="1.5"/><path d="M10.3 6 V8.9 a1.4 1.4 0 0 0 1.4 1.4 H14.6" fill="none" stroke="#ec1c24" stroke-width="1.1"/><path d="M10.7 18.4 L17.9 12.7 V16.2 C22.4 16.4 25.8 19.2 26.1 25.4 C24.2 21.8 21.6 20.6 17.9 20.6 V24.1Z" fill="#111"/></svg>
<div class="c ref" style="left:758.7px;top:605px">INV000348</div>
<div class="c" style="left:1016.3px;top:605px">10 Jul 2024</div>
<div class="c" style="left:1226.1px;top:605px">Guilders Medicals North</div>
<div class="c" style="right:773.70px;top:605px">8,041.20</div>
<svg style="left:1789.00px;top:604.00px" width="26" height="24" viewBox="0 0 26 24"><path d="M3.2 1 H21.9 a2.2 2.2 0 0 1 2.2 2.2 V12.5 a2.2 2.2 0 0 1 -2.2 2.2 H19 V20.7 L12.9 14.7 H3.2 a2.2 2.2 0 0 1 -2.2 -2.2 V3.2 a2.2 2.2 0 0 1 2.2 -2.2Z" fill="#fefad0" stroke="#15130f" stroke-width="1.85" stroke-linejoin="miter"/></svg>
<svg style="left:0;top:0" width="2546" height="1249" viewBox="0 0 2546 1249"><path transform="translate(1977.00 609.90) rotate(32.4)" d="M2.7 -.2 V9.0 A2.15 2.15 0 0 0 7.0 9.0 V-6.4 A3.5 3.5 0 0 0 0 -6.4 V12.5 A4.45 4.45 0 0 0 8.9 12.5 V-3.2" fill="none" stroke="#3d3a33" stroke-width="1.45" stroke-linecap="round"/></svg>
<svg style="left:2199.10px;top:605.05px" width="28" height="21" viewBox="0 0 28 21"><rect x=".7" y=".7" width="26.2" height="19.3" rx="2.6" fill="#fff" stroke="#0c0c0c" stroke-width="1.4"/><path d="M1.4 1.4 L12.4 11 Q13.8 12.2 15.2 11 L26.2 1.4 M1.4 19.4 L11.4 10.5 M26.2 19.4 L16.2 10.5" fill="none" stroke="#0c0c0c" stroke-width="1.15"/></svg>
<div class="cb" style="left:515.2px;top:639.10px"></div>
<svg style="left:565.20px;top:638.20px" width="24" height="26" viewBox="0 0 24 26"><path d="M9.3 .8 H18.3 L22.9 5.4 V18.4 a1.5 1.5 0 0 1 -1.5 1.5 H9.3 a1.5 1.5 0 0 1 -1.5 -1.5 V2.3 a1.5 1.5 0 0 1 1.5 -1.5Z" fill="rgba(255,255,255,.82)" stroke="#1f1f1f" stroke-width="1.5" stroke-linejoin="round"/><path d="M18.1 1 V4.1 a1.4 1.4 0 0 0 1.4 1.4 H22.7" fill="none" stroke="#1f1f1f" stroke-width="1.1"/><path d="M2.3 5.5 H11.3 L16 10.2 V23.3 a1.5 1.5 0 0 1 -1.5 1.5 H2.3 a1.5 1.5 0 0 1 -1.5 -1.5 V7 a1.5 1.5 0 0 1 1.5 -1.5Z" fill="#fdfaf2" stroke="#1f1f1f" stroke-width="1.6" stroke-linejoin="round"/><path d="M11.1 5.7 V8.9 a1.4 1.4 0 0 0 1.4 1.4 H15.8" fill="none" stroke="#1f1f1f" stroke-width="1.1"/></svg>
<svg style="left:662.00px;top:638.00px" width="27" height="26" viewBox="0 0 27 26"><path d="M6.9 5.4 V2.9 a1.5 1.5 0 0 1 1.5 -1.5 H16.2 L21 6.2 V12.6 H12 Z" fill="rgba(255,255,255,.85)" stroke="none"/><path d="M6.9 5.2 V2.9 a1.5 1.5 0 0 1 1.5 -1.5 H16.2 L21 6.2 V12.6" fill="none" stroke="#3a3a3a" stroke-width="1.4"/><path d="M16 1.6 V4.9 a1.4 1.4 0 0 0 1.4 1.4 H20.8" fill="none" stroke="#3a3a3a" stroke-width="1"/><path d="M10.4 24.1 H2.3 a1.5 1.5 0 0 1 -1.5 -1.5 V7.3 a1.5 1.5 0 0 1 1.5 -1.5 H10.4 L14.8 10.2 V13 L10.4 18 Z" fill="#fffdfb" stroke="none"/><path d="M10.2 24.1 H2.3 a1.5 1.5 0 0 1 -1.5 -1.5 V7.3 a1.5 1.5 0 0 1 1.5 -1.5 H10.4 L14.8 10.2 V12.2" fill="none" stroke="#ec1c24" stroke-width="1.5"/><path d="M10.3 6 V8.9 a1.4 1.4 0 0 0 1.4 1.4 H14.6" fill="none" stroke="#ec1c24" stroke-width="1.1"/><path d="M10.7 18.4 L17.9 12.7 V16.2 C22.4 16.4 25.8 19.2 26.1 25.4 C24.2 21.8 21.6 20.6 17.9 20.6 V24.1Z" fill="#111"/></svg>
<div class="c ref" style="left:758.7px;top:640px">INV000350</div>
<div class="c" style="left:1016.3px;top:640px">10 Jul 2024</div>
<div class="c" style="left:1226.1px;top:640px">Biomatic Choice</div>
<div class="c" style="right:773.70px;top:640px">4,812.00</div>
<svg style="left:1789.00px;top:640.00px" width="26" height="24" viewBox="0 0 26 24"><path d="M3.2 1 H21.9 a2.2 2.2 0 0 1 2.2 2.2 V12.5 a2.2 2.2 0 0 1 -2.2 2.2 H19 V20.7 L12.9 14.7 H3.2 a2.2 2.2 0 0 1 -2.2 -2.2 V3.2 a2.2 2.2 0 0 1 2.2 -2.2Z" fill="#fefad0" stroke="#15130f" stroke-width="1.85" stroke-linejoin="miter"/></svg>
<svg style="left:0;top:0" width="2546" height="1249" viewBox="0 0 2546 1249"><path transform="translate(1977.00 645.40) rotate(32.4)" d="M2.7 -.2 V9.0 A2.15 2.15 0 0 0 7.0 9.0 V-6.4 A3.5 3.5 0 0 0 0 -6.4 V12.5 A4.45 4.45 0 0 0 8.9 12.5 V-3.2" fill="none" stroke="#3d3a33" stroke-width="1.45" stroke-linecap="round"/></svg>
<svg style="left:2153.10px;top:637.00px" width="22" height="29" viewBox="0 0 22 29"><path d="M2.7 .7 H15.6 L21.1 6.4 V25.4 a2 2 0 0 1 -2 2 H2.7 a2 2 0 0 1 -2 -2 V2.7 a2 2 0 0 1 2 -2Z" fill="#fff" stroke="#141414" stroke-width="1.3" stroke-linejoin="round"/><path d="M15.2 1 V4.8 a1.7 1.7 0 0 0 1.7 1.7 H20.9" fill="none" stroke="#141414" stroke-width="1.1"/><path d="M3.4 7.6 H10.5 M3.4 10.7 H18.6 M3.6 13.9 H18.8 M3.4 17.2 H18 M3.4 20.3 H15.2" stroke="#6a6a6a" stroke-width="1.35" stroke-linecap="round"/></svg>
<svg style="left:2199.10px;top:641.05px" width="28" height="21" viewBox="0 0 28 21"><rect x=".7" y=".7" width="26.2" height="19.3" rx="2.6" fill="#fff" stroke="#0c0c0c" stroke-width="1.4"/><path d="M1.4 1.4 L12.4 11 Q13.8 12.2 15.2 11 L26.2 1.4 M1.4 19.4 L11.4 10.5 M26.2 19.4 L16.2 10.5" fill="none" stroke="#0c0c0c" stroke-width="1.15"/></svg>
<div class="cb" style="left:515.2px;top:674.10px"></div>
<svg style="left:565.20px;top:673.20px" width="24" height="26" viewBox="0 0 24 26"><path d="M9.3 .8 H18.3 L22.9 5.4 V18.4 a1.5 1.5 0 0 1 -1.5 1.5 H9.3 a1.5 1.5 0 0 1 -1.5 -1.5 V2.3 a1.5 1.5 0 0 1 1.5 -1.5Z" fill="rgba(255,255,255,.82)" stroke="#1f1f1f" stroke-width="1.5" stroke-linejoin="round"/><path d="M18.1 1 V4.1 a1.4 1.4 0 0 0 1.4 1.4 H22.7" fill="none" stroke="#1f1f1f" stroke-width="1.1"/><path d="M2.3 5.5 H11.3 L16 10.2 V23.3 a1.5 1.5 0 0 1 -1.5 1.5 H2.3 a1.5 1.5 0 0 1 -1.5 -1.5 V7 a1.5 1.5 0 0 1 1.5 -1.5Z" fill="#fdfaf2" stroke="#1f1f1f" stroke-width="1.6" stroke-linejoin="round"/><path d="M11.1 5.7 V8.9 a1.4 1.4 0 0 0 1.4 1.4 H15.8" fill="none" stroke="#1f1f1f" stroke-width="1.1"/></svg>
<svg style="left:662.00px;top:673.00px" width="27" height="26" viewBox="0 0 27 26"><path d="M6.9 5.4 V2.9 a1.5 1.5 0 0 1 1.5 -1.5 H16.2 L21 6.2 V12.6 H12 Z" fill="rgba(255,255,255,.85)" stroke="none"/><path d="M6.9 5.2 V2.9 a1.5 1.5 0 0 1 1.5 -1.5 H16.2 L21 6.2 V12.6" fill="none" stroke="#3a3a3a" stroke-width="1.4"/><path d="M16 1.6 V4.9 a1.4 1.4 0 0 0 1.4 1.4 H20.8" fill="none" stroke="#3a3a3a" stroke-width="1"/><path d="M10.4 24.1 H2.3 a1.5 1.5 0 0 1 -1.5 -1.5 V7.3 a1.5 1.5 0 0 1 1.5 -1.5 H10.4 L14.8 10.2 V13 L10.4 18 Z" fill="#fffdfb" stroke="none"/><path d="M10.2 24.1 H2.3 a1.5 1.5 0 0 1 -1.5 -1.5 V7.3 a1.5 1.5 0 0 1 1.5 -1.5 H10.4 L14.8 10.2 V12.2" fill="none" stroke="#ec1c24" stroke-width="1.5"/><path d="M10.3 6 V8.9 a1.4 1.4 0 0 0 1.4 1.4 H14.6" fill="none" stroke="#ec1c24" stroke-width="1.1"/><path d="M10.7 18.4 L17.9 12.7 V16.2 C22.4 16.4 25.8 19.2 26.1 25.4 C24.2 21.8 21.6 20.6 17.9 20.6 V24.1Z" fill="#111"/></svg>
<div class="c ref" style="left:758.7px;top:676px">INV000339</div>
<div class="c" style="left:1016.3px;top:676px">01 Dec 2023</div>
<div class="c" style="left:1226.1px;top:676px">Guilders Medicals North</div>
<div class="c" style="right:773.70px;top:676px">4,812.00</div>
<svg style="left:1789.00px;top:675.00px" width="26" height="24" viewBox="0 0 26 24"><path d="M3.2 1 H21.9 a2.2 2.2 0 0 1 2.2 2.2 V12.5 a2.2 2.2 0 0 1 -2.2 2.2 H19 V20.7 L12.9 14.7 H3.2 a2.2 2.2 0 0 1 -2.2 -2.2 V3.2 a2.2 2.2 0 0 1 2.2 -2.2Z" fill="#fefad0" stroke="#15130f" stroke-width="1.85" stroke-linejoin="miter"/></svg>
<svg style="left:0;top:0" width="2546" height="1249" viewBox="0 0 2546 1249"><path transform="translate(1977.00 680.90) rotate(32.4)" d="M2.7 -.2 V9.0 A2.15 2.15 0 0 0 7.0 9.0 V-6.4 A3.5 3.5 0 0 0 0 -6.4 V12.5 A4.45 4.45 0 0 0 8.9 12.5 V-3.2" fill="none" stroke="#3d3a33" stroke-width="1.45" stroke-linecap="round"/></svg>
<svg style="left:2199.10px;top:676.05px" width="28" height="21" viewBox="0 0 28 21"><rect x=".7" y=".7" width="26.2" height="19.3" rx="2.6" fill="#fff" stroke="#0c0c0c" stroke-width="1.4"/><path d="M1.4 1.4 L12.4 11 Q13.8 12.2 15.2 11 L26.2 1.4 M1.4 19.4 L11.4 10.5 M26.2 19.4 L16.2 10.5" fill="none" stroke="#0c0c0c" stroke-width="1.15"/></svg>
<div class="cb" style="left:515.2px;top:708.10px"></div>
<svg style="left:565.20px;top:707.20px" width="24" height="26" viewBox="0 0 24 26"><path d="M9.3 .8 H18.3 L22.9 5.4 V18.4 a1.5 1.5 0 0 1 -1.5 1.5 H9.3 a1.5 1.5 0 0 1 -1.5 -1.5 V2.3 a1.5 1.5 0 0 1 1.5 -1.5Z" fill="rgba(255,255,255,.82)" stroke="#1f1f1f" stroke-width="1.5" stroke-linejoin="round"/><path d="M18.1 1 V4.1 a1.4 1.4 0 0 0 1.4 1.4 H22.7" fill="none" stroke="#1f1f1f" stroke-width="1.1"/><path d="M2.3 5.5 H11.3 L16 10.2 V23.3 a1.5 1.5 0 0 1 -1.5 1.5 H2.3 a1.5 1.5 0 0 1 -1.5 -1.5 V7 a1.5 1.5 0 0 1 1.5 -1.5Z" fill="#fdfaf2" stroke="#1f1f1f" stroke-width="1.6" stroke-linejoin="round"/><path d="M11.1 5.7 V8.9 a1.4 1.4 0 0 0 1.4 1.4 H15.8" fill="none" stroke="#1f1f1f" stroke-width="1.1"/></svg>
<svg style="left:662.00px;top:707.00px" width="27" height="26" viewBox="0 0 27 26"><path d="M6.9 5.4 V2.9 a1.5 1.5 0 0 1 1.5 -1.5 H16.2 L21 6.2 V12.6 H12 Z" fill="rgba(255,255,255,.85)" stroke="none"/><path d="M6.9 5.2 V2.9 a1.5 1.5 0 0 1 1.5 -1.5 H16.2 L21 6.2 V12.6" fill="none" stroke="#3a3a3a" stroke-width="1.4"/><path d="M16 1.6 V4.9 a1.4 1.4 0 0 0 1.4 1.4 H20.8" fill="none" stroke="#3a3a3a" stroke-width="1"/><path d="M10.4 24.1 H2.3 a1.5 1.5 0 0 1 -1.5 -1.5 V7.3 a1.5 1.5 0 0 1 1.5 -1.5 H10.4 L14.8 10.2 V13 L10.4 18 Z" fill="#fffdfb" stroke="none"/><path d="M10.2 24.1 H2.3 a1.5 1.5 0 0 1 -1.5 -1.5 V7.3 a1.5 1.5 0 0 1 1.5 -1.5 H10.4 L14.8 10.2 V12.2" fill="none" stroke="#ec1c24" stroke-width="1.5"/><path d="M10.3 6 V8.9 a1.4 1.4 0 0 0 1.4 1.4 H14.6" fill="none" stroke="#ec1c24" stroke-width="1.1"/><path d="M10.7 18.4 L17.9 12.7 V16.2 C22.4 16.4 25.8 19.2 26.1 25.4 C24.2 21.8 21.6 20.6 17.9 20.6 V24.1Z" fill="#111"/></svg>
<div class="c ref" style="left:758.7px;top:710px">INV000338</div>
<div class="c" style="left:1016.3px;top:710px">26 Oct 2023</div>
<div class="c" style="left:1226.1px;top:710px">Biomatic Choice</div>
<svg style="left:1789.00px;top:709.00px" width="26" height="24" viewBox="0 0 26 24"><path d="M3.2 1 H21.9 a2.2 2.2 0 0 1 2.2 2.2 V12.5 a2.2 2.2 0 0 1 -2.2 2.2 H19 V20.7 L12.9 14.7 H3.2 a2.2 2.2 0 0 1 -2.2 -2.2 V3.2 a2.2 2.2 0 0 1 2.2 -2.2Z" fill="#fefad0" stroke="#15130f" stroke-width="1.85" stroke-linejoin="miter"/></svg>
<svg style="left:0;top:0" width="2546" height="1249" viewBox="0 0 2546 1249"><path transform="translate(1977.00 714.90) rotate(32.4)" d="M2.7 -.2 V9.0 A2.15 2.15 0 0 0 7.0 9.0 V-6.4 A3.5 3.5 0 0 0 0 -6.4 V12.5 A4.45 4.45 0 0 0 8.9 12.5 V-3.2" fill="none" stroke="#3d3a33" stroke-width="1.45" stroke-linecap="round"/></svg>
<svg style="left:2153.10px;top:707.00px" width="22" height="29" viewBox="0 0 22 29"><path d="M2.7 .7 H15.6 L21.1 6.4 V25.4 a2 2 0 0 1 -2 2 H2.7 a2 2 0 0 1 -2 -2 V2.7 a2 2 0 0 1 2 -2Z" fill="#fff" stroke="#141414" stroke-width="1.3" stroke-linejoin="round"/><path d="M15.2 1 V4.8 a1.7 1.7 0 0 0 1.7 1.7 H20.9" fill="none" stroke="#141414" stroke-width="1.1"/><path d="M3.4 7.6 H10.5 M3.4 10.7 H18.6 M3.6 13.9 H18.8 M3.4 17.2 H18 M3.4 20.3 H15.2" stroke="#6a6a6a" stroke-width="1.35" stroke-linecap="round"/></svg>
<svg style="left:2199.10px;top:710.05px" width="28" height="21" viewBox="0 0 28 21"><rect x=".7" y=".7" width="26.2" height="19.3" rx="2.6" fill="#fff" stroke="#0c0c0c" stroke-width="1.4"/><path d="M1.4 1.4 L12.4 11 Q13.8 12.2 15.2 11 L26.2 1.4 M1.4 19.4 L11.4 10.5 M26.2 19.4 L16.2 10.5" fill="none" stroke="#0c0c0c" stroke-width="1.15"/></svg>
<div class="cb" style="left:515.2px;top:741.10px"></div>
<svg style="left:565.20px;top:740.20px" width="24" height="26" viewBox="0 0 24 26"><path d="M9.3 .8 H18.3 L22.9 5.4 V18.4 a1.5 1.5 0 0 1 -1.5 1.5 H9.3 a1.5 1.5 0 0 1 -1.5 -1.5 V2.3 a1.5 1.5 0 0 1 1.5 -1.5Z" fill="rgba(255,255,255,.82)" stroke="#1f1f1f" stroke-width="1.5" stroke-linejoin="round"/><path d="M18.1 1 V4.1 a1.4 1.4 0 0 0 1.4 1.4 H22.7" fill="none" stroke="#1f1f1f" stroke-width="1.1"/><path d="M2.3 5.5 H11.3 L16 10.2 V23.3 a1.5 1.5 0 0 1 -1.5 1.5 H2.3 a1.5 1.5 0 0 1 -1.5 -1.5 V7 a1.5 1.5 0 0 1 1.5 -1.5Z" fill="#fdfaf2" stroke="#1f1f1f" stroke-width="1.6" stroke-linejoin="round"/><path d="M11.1 5.7 V8.9 a1.4 1.4 0 0 0 1.4 1.4 H15.8" fill="none" stroke="#1f1f1f" stroke-width="1.1"/></svg>
<svg style="left:662.00px;top:740.00px" width="27" height="26" viewBox="0 0 27 26"><path d="M6.9 5.4 V2.9 a1.5 1.5 0 0 1 1.5 -1.5 H16.2 L21 6.2 V12.6 H12 Z" fill="rgba(255,255,255,.85)" stroke="none"/><path d="M6.9 5.2 V2.9 a1.5 1.5 0 0 1 1.5 -1.5 H16.2 L21 6.2 V12.6" fill="none" stroke="#3a3a3a" stroke-width="1.4"/><path d="M16 1.6 V4.9 a1.4 1.4 0 0 0 1.4 1.4 H20.8" fill="none" stroke="#3a3a3a" stroke-width="1"/><path d="M10.4 24.1 H2.3 a1.5 1.5 0 0 1 -1.5 -1.5 V7.3 a1.5 1.5 0 0 1 1.5 -1.5 H10.4 L14.8 10.2 V13 L10.4 18 Z" fill="#fffdfb" stroke="none"/><path d="M10.2 24.1 H2.3 a1.5 1.5 0 0 1 -1.5 -1.5 V7.3 a1.5 1.5 0 0 1 1.5 -1.5 H10.4 L14.8 10.2 V12.2" fill="none" stroke="#ec1c24" stroke-width="1.5"/><path d="M10.3 6 V8.9 a1.4 1.4 0 0 0 1.4 1.4 H14.6" fill="none" stroke="#ec1c24" stroke-width="1.1"/><path d="M10.7 18.4 L17.9 12.7 V16.2 C22.4 16.4 25.8 19.2 26.1 25.4 C24.2 21.8 21.6 20.6 17.9 20.6 V24.1Z" fill="#111"/></svg>
<div class="c ref" style="left:758.7px;top:742px">INV000336</div>
<div class="c" style="left:1016.3px;top:742px">02 Oct 2023</div>
<div class="c" style="left:1226.1px;top:742px">Biomatic Choice</div>
<svg style="left:1789.00px;top:742.00px" width="26" height="24" viewBox="0 0 26 24"><path d="M3.2 1 H21.9 a2.2 2.2 0 0 1 2.2 2.2 V12.5 a2.2 2.2 0 0 1 -2.2 2.2 H19 V20.7 L12.9 14.7 H3.2 a2.2 2.2 0 0 1 -2.2 -2.2 V3.2 a2.2 2.2 0 0 1 2.2 -2.2Z" fill="#fefad0" stroke="#15130f" stroke-width="1.85" stroke-linejoin="miter"/></svg>
<svg style="left:0;top:0" width="2546" height="1249" viewBox="0 0 2546 1249"><path transform="translate(1977.00 747.40) rotate(32.4)" d="M2.7 -.2 V9.0 A2.15 2.15 0 0 0 7.0 9.0 V-6.4 A3.5 3.5 0 0 0 0 -6.4 V12.5 A4.45 4.45 0 0 0 8.9 12.5 V-3.2" fill="none" stroke="#3d3a33" stroke-width="1.45" stroke-linecap="round"/></svg>
<svg style="left:2199.10px;top:743.05px" width="28" height="21" viewBox="0 0 28 21"><rect x=".7" y=".7" width="26.2" height="19.3" rx="2.6" fill="#fff" stroke="#0c0c0c" stroke-width="1.4"/><path d="M1.4 1.4 L12.4 11 Q13.8 12.2 15.2 11 L26.2 1.4 M1.4 19.4 L11.4 10.5 M26.2 19.4 L16.2 10.5" fill="none" stroke="#0c0c0c" stroke-width="1.15"/></svg>
<div class="cb" style="left:515.2px;top:773.10px"></div>
<svg style="left:565.20px;top:772.20px" width="24" height="26" viewBox="0 0 24 26"><path d="M9.3 .8 H18.3 L22.9 5.4 V18.4 a1.5 1.5 0 0 1 -1.5 1.5 H9.3 a1.5 1.5 0 0 1 -1.5 -1.5 V2.3 a1.5 1.5 0 0 1 1.5 -1.5Z" fill="rgba(255,255,255,.82)" stroke="#1f1f1f" stroke-width="1.5" stroke-linejoin="round"/><path d="M18.1 1 V4.1 a1.4 1.4 0 0 0 1.4 1.4 H22.7" fill="none" stroke="#1f1f1f" stroke-width="1.1"/><path d="M2.3 5.5 H11.3 L16 10.2 V23.3 a1.5 1.5 0 0 1 -1.5 1.5 H2.3 a1.5 1.5 0 0 1 -1.5 -1.5 V7 a1.5 1.5 0 0 1 1.5 -1.5Z" fill="#fdfaf2" stroke="#1f1f1f" stroke-width="1.6" stroke-linejoin="round"/><path d="M11.1 5.7 V8.9 a1.4 1.4 0 0 0 1.4 1.4 H15.8" fill="none" stroke="#1f1f1f" stroke-width="1.1"/></svg>
<svg style="left:662.00px;top:772.00px" width="27" height="26" viewBox="0 0 27 26"><path d="M6.9 5.4 V2.9 a1.5 1.5 0 0 1 1.5 -1.5 H16.2 L21 6.2 V12.6 H12 Z" fill="rgba(255,255,255,.85)" stroke="none"/><path d="M6.9 5.2 V2.9 a1.5 1.5 0 0 1 1.5 -1.5 H16.2 L21 6.2 V12.6" fill="none" stroke="#3a3a3a" stroke-width="1.4"/><path d="M16 1.6 V4.9 a1.4 1.4 0 0 0 1.4 1.4 H20.8" fill="none" stroke="#3a3a3a" stroke-width="1"/><path d="M10.4 24.1 H2.3 a1.5 1.5 0 0 1 -1.5 -1.5 V7.3 a1.5 1.5 0 0 1 1.5 -1.5 H10.4 L14.8 10.2 V13 L10.4 18 Z" fill="#fffdfb" stroke="none"/><path d="M10.2 24.1 H2.3 a1.5 1.5 0 0 1 -1.5 -1.5 V7.3 a1.5 1.5 0 0 1 1.5 -1.5 H10.4 L14.8 10.2 V12.2" fill="none" stroke="#ec1c24" stroke-width="1.5"/><path d="M10.3 6 V8.9 a1.4 1.4 0 0 0 1.4 1.4 H14.6" fill="none" stroke="#ec1c24" stroke-width="1.1"/><path d="M10.7 18.4 L17.9 12.7 V16.2 C22.4 16.4 25.8 19.2 26.1 25.4 C24.2 21.8 21.6 20.6 17.9 20.6 V24.1Z" fill="#111"/></svg>
<div class="c ref" style="left:758.7px;top:775px">INV000337</div>
<div class="c" style="left:1016.3px;top:775px">02 Oct 2023</div>
<div class="c" style="left:1226.1px;top:775px">Biomatic Choice</div>
<svg style="left:1789.00px;top:774.00px" width="26" height="24" viewBox="0 0 26 24"><path d="M3.2 1 H21.9 a2.2 2.2 0 0 1 2.2 2.2 V12.5 a2.2 2.2 0 0 1 -2.2 2.2 H19 V20.7 L12.9 14.7 H3.2 a2.2 2.2 0 0 1 -2.2 -2.2 V3.2 a2.2 2.2 0 0 1 2.2 -2.2Z" fill="#fefad0" stroke="#15130f" stroke-width="1.85" stroke-linejoin="miter"/></svg>
<svg style="left:0;top:0" width="2546" height="1249" viewBox="0 0 2546 1249"><path transform="translate(1977.00 779.90) rotate(32.4)" d="M2.7 -.2 V9.0 A2.15 2.15 0 0 0 7.0 9.0 V-6.4 A3.5 3.5 0 0 0 0 -6.4 V12.5 A4.45 4.45 0 0 0 8.9 12.5 V-3.2" fill="none" stroke="#3d3a33" stroke-width="1.45" stroke-linecap="round"/></svg>
<svg style="left:2199.10px;top:775.05px" width="28" height="21" viewBox="0 0 28 21"><rect x=".7" y=".7" width="26.2" height="19.3" rx="2.6" fill="#fff" stroke="#0c0c0c" stroke-width="1.4"/><path d="M1.4 1.4 L12.4 11 Q13.8 12.2 15.2 11 L26.2 1.4 M1.4 19.4 L11.4 10.5 M26.2 19.4 L16.2 10.5" fill="none" stroke="#0c0c0c" stroke-width="1.15"/></svg>
<div class="cb" style="left:515.2px;top:806.10px"></div>
<svg style="left:565.20px;top:805.20px" width="24" height="26" viewBox="0 0 24 26"><path d="M9.3 .8 H18.3 L22.9 5.4 V18.4 a1.5 1.5 0 0 1 -1.5 1.5 H9.3 a1.5 1.5 0 0 1 -1.5 -1.5 V2.3 a1.5 1.5 0 0 1 1.5 -1.5Z" fill="rgba(255,255,255,.82)" stroke="#1f1f1f" stroke-width="1.5" stroke-linejoin="round"/><path d="M18.1 1 V4.1 a1.4 1.4 0 0 0 1.4 1.4 H22.7" fill="none" stroke="#1f1f1f" stroke-width="1.1"/><path d="M2.3 5.5 H11.3 L16 10.2 V23.3 a1.5 1.5 0 0 1 -1.5 1.5 H2.3 a1.5 1.5 0 0 1 -1.5 -1.5 V7 a1.5 1.5 0 0 1 1.5 -1.5Z" fill="#fdfaf2" stroke="#1f1f1f" stroke-width="1.6" stroke-linejoin="round"/><path d="M11.1 5.7 V8.9 a1.4 1.4 0 0 0 1.4 1.4 H15.8" fill="none" stroke="#1f1f1f" stroke-width="1.1"/></svg>
<svg style="left:662.00px;top:805.00px" width="27" height="26" viewBox="0 0 27 26"><path d="M6.9 5.4 V2.9 a1.5 1.5 0 0 1 1.5 -1.5 H16.2 L21 6.2 V12.6 H12 Z" fill="rgba(255,255,255,.85)" stroke="none"/><path d="M6.9 5.2 V2.9 a1.5 1.5 0 0 1 1.5 -1.5 H16.2 L21 6.2 V12.6" fill="none" stroke="#3a3a3a" stroke-width="1.4"/><path d="M16 1.6 V4.9 a1.4 1.4 0 0 0 1.4 1.4 H20.8" fill="none" stroke="#3a3a3a" stroke-width="1"/><path d="M10.4 24.1 H2.3 a1.5 1.5 0 0 1 -1.5 -1.5 V7.3 a1.5 1.5 0 0 1 1.5 -1.5 H10.4 L14.8 10.2 V13 L10.4 18 Z" fill="#fffdfb" stroke="none"/><path d="M10.2 24.1 H2.3 a1.5 1.5 0 0 1 -1.5 -1.5 V7.3 a1.5 1.5 0 0 1 1.5 -1.5 H10.4 L14.8 10.2 V12.2" fill="none" stroke="#ec1c24" stroke-width="1.5"/><path d="M10.3 6 V8.9 a1.4 1.4 0 0 0 1.4 1.4 H14.6" fill="none" stroke="#ec1c24" stroke-width="1.1"/><path d="M10.7 18.4 L17.9 12.7 V16.2 C22.4 16.4 25.8 19.2 26.1 25.4 C24.2 21.8 21.6 20.6 17.9 20.6 V24.1Z" fill="#111"/></svg>
<div class="c ref" style="left:758.7px;top:807px">INV000328</div>
<div class="c" style="left:1016.3px;top:807px">22 Aug 2023</div>
<div class="c" style="left:1226.1px;top:807px">Biomatic Choice</div>
<svg style="left:1789.00px;top:807.00px" width="26" height="24" viewBox="0 0 26 24"><path d="M3.2 1 H21.9 a2.2 2.2 0 0 1 2.2 2.2 V12.5 a2.2 2.2 0 0 1 -2.2 2.2 H19 V20.7 L12.9 14.7 H3.2 a2.2 2.2 0 0 1 -2.2 -2.2 V3.2 a2.2 2.2 0 0 1 2.2 -2.2Z" fill="#fefad0" stroke="#15130f" stroke-width="1.85" stroke-linejoin="miter"/></svg>
<svg style="left:0;top:0" width="2546" height="1249" viewBox="0 0 2546 1249"><path transform="translate(1977.00 812.40) rotate(32.4)" d="M2.7 -.2 V9.0 A2.15 2.15 0 0 0 7.0 9.0 V-6.4 A3.5 3.5 0 0 0 0 -6.4 V12.5 A4.45 4.45 0 0 0 8.9 12.5 V-3.2" fill="none" stroke="#3d3a33" stroke-width="1.45" stroke-linecap="round"/></svg>
<svg style="left:2153.10px;top:804.00px" width="22" height="29" viewBox="0 0 22 29"><path d="M2.7 .7 H15.6 L21.1 6.4 V25.4 a2 2 0 0 1 -2 2 H2.7 a2 2 0 0 1 -2 -2 V2.7 a2 2 0 0 1 2 -2Z" fill="#fff" stroke="#141414" stroke-width="1.3" stroke-linejoin="round"/><path d="M15.2 1 V4.8 a1.7 1.7 0 0 0 1.7 1.7 H20.9" fill="none" stroke="#141414" stroke-width="1.1"/><path d="M3.4 7.6 H10.5 M3.4 10.7 H18.6 M3.6 13.9 H18.8 M3.4 17.2 H18 M3.4 20.3 H15.2" stroke="#6a6a6a" stroke-width="1.35" stroke-linecap="round"/></svg>
<svg style="left:2199.10px;top:808.05px" width="28" height="21" viewBox="0 0 28 21"><rect x=".7" y=".7" width="26.2" height="19.3" rx="2.6" fill="#fff" stroke="#0c0c0c" stroke-width="1.4"/><path d="M1.4 1.4 L12.4 11 Q13.8 12.2 15.2 11 L26.2 1.4 M1.4 19.4 L11.4 10.5 M26.2 19.4 L16.2 10.5" fill="none" stroke="#0c0c0c" stroke-width="1.15"/></svg>
<div class="cb" style="left:515.2px;top:838.10px"></div>
<svg style="left:565.20px;top:837.20px" width="24" height="26" viewBox="0 0 24 26"><path d="M9.3 .8 H18.3 L22.9 5.4 V18.4 a1.5 1.5 0 0 1 -1.5 1.5 H9.3 a1.5 1.5 0 0 1 -1.5 -1.5 V2.3 a1.5 1.5 0 0 1 1.5 -1.5Z" fill="rgba(255,255,255,.82)" stroke="#1f1f1f" stroke-width="1.5" stroke-linejoin="round"/><path d="M18.1 1 V4.1 a1.4 1.4 0 0 0 1.4 1.4 H22.7" fill="none" stroke="#1f1f1f" stroke-width="1.1"/><path d="M2.3 5.5 H11.3 L16 10.2 V23.3 a1.5 1.5 0 0 1 -1.5 1.5 H2.3 a1.5 1.5 0 0 1 -1.5 -1.5 V7 a1.5 1.5 0 0 1 1.5 -1.5Z" fill="#fdfaf2" stroke="#1f1f1f" stroke-width="1.6" stroke-linejoin="round"/><path d="M11.1 5.7 V8.9 a1.4 1.4 0 0 0 1.4 1.4 H15.8" fill="none" stroke="#1f1f1f" stroke-width="1.1"/></svg>
<svg style="left:662.00px;top:837.00px" width="27" height="26" viewBox="0 0 27 26"><path d="M6.9 5.4 V2.9 a1.5 1.5 0 0 1 1.5 -1.5 H16.2 L21 6.2 V12.6 H12 Z" fill="rgba(255,255,255,.85)" stroke="none"/><path d="M6.9 5.2 V2.9 a1.5 1.5 0 0 1 1.5 -1.5 H16.2 L21 6.2 V12.6" fill="none" stroke="#3a3a3a" stroke-width="1.4"/><path d="M16 1.6 V4.9 a1.4 1.4 0 0 0 1.4 1.4 H20.8" fill="none" stroke="#3a3a3a" stroke-width="1"/><path d="M10.4 24.1 H2.3 a1.5 1.5 0 0 1 -1.5 -1.5 V7.3 a1.5 1.5 0 0 1 1.5 -1.5 H10.4 L14.8 10.2 V13 L10.4 18 Z" fill="#fffdfb" stroke="none"/><path d="M10.2 24.1 H2.3 a1.5 1.5 0 0 1 -1.5 -1.5 V7.3 a1.5 1.5 0 0 1 1.5 -1.5 H10.4 L14.8 10.2 V12.2" fill="none" stroke="#ec1c24" stroke-width="1.5"/><path d="M10.3 6 V8.9 a1.4 1.4 0 0 0 1.4 1.4 H14.6" fill="none" stroke="#ec1c24" stroke-width="1.1"/><path d="M10.7 18.4 L17.9 12.7 V16.2 C22.4 16.4 25.8 19.2 26.1 25.4 C24.2 21.8 21.6 20.6 17.9 20.6 V24.1Z" fill="#111"/></svg>
<div class="c ref" style="left:758.7px;top:840px">INV000330</div>
<div class="c" style="left:1016.3px;top:840px">22 Aug 2023</div>
<div class="c" style="left:1226.1px;top:840px">Biomatic Choice</div>
<svg style="left:1789.00px;top:839.00px" width="26" height="24" viewBox="0 0 26 24"><path d="M3.2 1 H21.9 a2.2 2.2 0 0 1 2.2 2.2 V12.5 a2.2 2.2 0 0 1 -2.2 2.2 H19 V20.7 L12.9 14.7 H3.2 a2.2 2.2 0 0 1 -2.2 -2.2 V3.2 a2.2 2.2 0 0 1 2.2 -2.2Z" fill="#fefad0" stroke="#15130f" stroke-width="1.85" stroke-linejoin="miter"/></svg>
<svg style="left:0;top:0" width="2546" height="1249" viewBox="0 0 2546 1249"><path transform="translate(1977.00 844.90) rotate(32.4)" d="M2.7 -.2 V9.0 A2.15 2.15 0 0 0 7.0 9.0 V-6.4 A3.5 3.5 0 0 0 0 -6.4 V12.5 A4.45 4.45 0 0 0 8.9 12.5 V-3.2" fill="none" stroke="#3d3a33" stroke-width="1.45" stroke-linecap="round"/></svg>
<svg style="left:2199.10px;top:840.05px" width="28" height="21" viewBox="0 0 28 21"><rect x=".7" y=".7" width="26.2" height="19.3" rx="2.6" fill="#fff" stroke="#0c0c0c" stroke-width="1.4"/><path d="M1.4 1.4 L12.4 11 Q13.8 12.2 15.2 11 L26.2 1.4 M1.4 19.4 L11.4 10.5 M26.2 19.4 L16.2 10.5" fill="none" stroke="#0c0c0c" stroke-width="1.15"/></svg>
<div class="cb" style="left:515.2px;top:872.10px"></div>
<svg style="left:565.20px;top:871.20px" width="24" height="26" viewBox="0 0 24 26"><path d="M9.3 .8 H18.3 L22.9 5.4 V18.4 a1.5 1.5 0 0 1 -1.5 1.5 H9.3 a1.5 1.5 0 0 1 -1.5 -1.5 V2.3 a1.5 1.5 0 0 1 1.5 -1.5Z" fill="rgba(255,255,255,.82)" stroke="#1f1f1f" stroke-width="1.5" stroke-linejoin="round"/><path d="M18.1 1 V4.1 a1.4 1.4 0 0 0 1.4 1.4 H22.7" fill="none" stroke="#1f1f1f" stroke-width="1.1"/><path d="M2.3 5.5 H11.3 L16 10.2 V23.3 a1.5 1.5 0 0 1 -1.5 1.5 H2.3 a1.5 1.5 0 0 1 -1.5 -1.5 V7 a1.5 1.5 0 0 1 1.5 -1.5Z" fill="#fdfaf2" stroke="#1f1f1f" stroke-width="1.6" stroke-linejoin="round"/><path d="M11.1 5.7 V8.9 a1.4 1.4 0 0 0 1.4 1.4 H15.8" fill="none" stroke="#1f1f1f" stroke-width="1.1"/></svg>
<svg style="left:662.00px;top:871.00px" width="27" height="26" viewBox="0 0 27 26"><path d="M6.9 5.4 V2.9 a1.5 1.5 0 0 1 1.5 -1.5 H16.2 L21 6.2 V12.6 H12 Z" fill="rgba(255,255,255,.85)" stroke="none"/><path d="M6.9 5.2 V2.9 a1.5 1.5 0 0 1 1.5 -1.5 H16.2 L21 6.2 V12.6" fill="none" stroke="#3a3a3a" stroke-width="1.4"/><path d="M16 1.6 V4.9 a1.4 1.4 0 0 0 1.4 1.4 H20.8" fill="none" stroke="#3a3a3a" stroke-width="1"/><path d="M10.4 24.1 H2.3 a1.5 1.5 0 0 1 -1.5 -1.5 V7.3 a1.5 1.5 0 0 1 1.5 -1.5 H10.4 L14.8 10.2 V13 L10.4 18 Z" fill="#fffdfb" stroke="none"/><path d="M10.2 24.1 H2.3 a1.5 1.5 0 0 1 -1.5 -1.5 V7.3 a1.5 1.5 0 0 1 1.5 -1.5 H10.4 L14.8 10.2 V12.2" fill="none" stroke="#ec1c24" stroke-width="1.5"/><path d="M10.3 6 V8.9 a1.4 1.4 0 0 0 1.4 1.4 H14.6" fill="none" stroke="#ec1c24" stroke-width="1.1"/><path d="M10.7 18.4 L17.9 12.7 V16.2 C22.4 16.4 25.8 19.2 26.1 25.4 C24.2 21.8 21.6 20.6 17.9 20.6 V24.1Z" fill="#111"/></svg>
<div class="c ref" style="left:758.7px;top:874px">INV000331</div>
<div class="c" style="left:1016.3px;top:874px">22 Aug 2023</div>
<div class="c" style="left:1226.1px;top:874px">Biomatic Choice</div>
<div class="c" style="right:773.70px;top:874px">4,812.00</div>
<svg style="left:1789.00px;top:873.00px" width="26" height="24" viewBox="0 0 26 24"><path d="M3.2 1 H21.9 a2.2 2.2 0 0 1 2.2 2.2 V12.5 a2.2 2.2 0 0 1 -2.2 2.2 H19 V20.7 L12.9 14.7 H3.2 a2.2 2.2 0 0 1 -2.2 -2.2 V3.2 a2.2 2.2 0 0 1 2.2 -2.2Z" fill="#fefad0" stroke="#15130f" stroke-width="1.85" stroke-linejoin="miter"/></svg>
<svg style="left:0;top:0" width="2546" height="1249" viewBox="0 0 2546 1249"><path transform="translate(1977.00 878.90) rotate(32.4)" d="M2.7 -.2 V9.0 A2.15 2.15 0 0 0 7.0 9.0 V-6.4 A3.5 3.5 0 0 0 0 -6.4 V12.5 A4.45 4.45 0 0 0 8.9 12.5 V-3.2" fill="none" stroke="#3d3a33" stroke-width="1.45" stroke-linecap="round"/></svg>
<svg style="left:2199.10px;top:874.05px" width="28" height="21" viewBox="0 0 28 21"><rect x=".7" y=".7" width="26.2" height="19.3" rx="2.6" fill="#fff" stroke="#0c0c0c" stroke-width="1.4"/><path d="M1.4 1.4 L12.4 11 Q13.8 12.2 15.2 11 L26.2 1.4 M1.4 19.4 L11.4 10.5 M26.2 19.4 L16.2 10.5" fill="none" stroke="#0c0c0c" stroke-width="1.15"/></svg>
<div class="cb" style="left:515.2px;top:906.10px"></div>
<svg style="left:565.20px;top:905.20px" width="24" height="26" viewBox="0 0 24 26"><path d="M9.3 .8 H18.3 L22.9 5.4 V18.4 a1.5 1.5 0 0 1 -1.5 1.5 H9.3 a1.5 1.5 0 0 1 -1.5 -1.5 V2.3 a1.5 1.5 0 0 1 1.5 -1.5Z" fill="rgba(255,255,255,.82)" stroke="#1f1f1f" stroke-width="1.5" stroke-linejoin="round"/><path d="M18.1 1 V4.1 a1.4 1.4 0 0 0 1.4 1.4 H22.7" fill="none" stroke="#1f1f1f" stroke-width="1.1"/><path d="M2.3 5.5 H11.3 L16 10.2 V23.3 a1.5 1.5 0 0 1 -1.5 1.5 H2.3 a1.5 1.5 0 0 1 -1.5 -1.5 V7 a1.5 1.5 0 0 1 1.5 -1.5Z" fill="#fdfaf2" stroke="#1f1f1f" stroke-width="1.6" stroke-linejoin="round"/><path d="M11.1 5.7 V8.9 a1.4 1.4 0 0 0 1.4 1.4 H15.8" fill="none" stroke="#1f1f1f" stroke-width="1.1"/></svg>
<svg style="left:662.00px;top:905.00px" width="27" height="26" viewBox="0 0 27 26"><path d="M6.9 5.4 V2.9 a1.5 1.5 0 0 1 1.5 -1.5 H16.2 L21 6.2 V12.6 H12 Z" fill="rgba(255,255,255,.85)" stroke="none"/><path d="M6.9 5.2 V2.9 a1.5 1.5 0 0 1 1.5 -1.5 H16.2 L21 6.2 V12.6" fill="none" stroke="#3a3a3a" stroke-width="1.4"/><path d="M16 1.6 V4.9 a1.4 1.4 0 0 0 1.4 1.4 H20.8" fill="none" stroke="#3a3a3a" stroke-width="1"/><path d="M10.4 24.1 H2.3 a1.5 1.5 0 0 1 -1.5 -1.5 V7.3 a1.5 1.5 0 0 1 1.5 -1.5 H10.4 L14.8 10.2 V13 L10.4 18 Z" fill="#fffdfb" stroke="none"/><path d="M10.2 24.1 H2.3 a1.5 1.5 0 0 1 -1.5 -1.5 V7.3 a1.5 1.5 0 0 1 1.5 -1.5 H10.4 L14.8 10.2 V12.2" fill="none" stroke="#ec1c24" stroke-width="1.5"/><path d="M10.3 6 V8.9 a1.4 1.4 0 0 0 1.4 1.4 H14.6" fill="none" stroke="#ec1c24" stroke-width="1.1"/><path d="M10.7 18.4 L17.9 12.7 V16.2 C22.4 16.4 25.8 19.2 26.1 25.4 C24.2 21.8 21.6 20.6 17.9 20.6 V24.1Z" fill="#111"/></svg>
<div class="c ref" style="left:758.7px;top:908px">INV000332</div>
<div class="c" style="left:1016.3px;top:908px">22 Aug 2023</div>
<div class="c" style="left:1226.1px;top:908px">Biomatic Choice</div>
<svg style="left:1789.00px;top:907.00px" width="26" height="24" viewBox="0 0 26 24"><path d="M3.2 1 H21.9 a2.2 2.2 0 0 1 2.2 2.2 V12.5 a2.2 2.2 0 0 1 -2.2 2.2 H19 V20.7 L12.9 14.7 H3.2 a2.2 2.2 0 0 1 -2.2 -2.2 V3.2 a2.2 2.2 0 0 1 2.2 -2.2Z" fill="#fefad0" stroke="#15130f" stroke-width="1.85" stroke-linejoin="miter"/></svg>
<svg style="left:0;top:0" width="2546" height="1249" viewBox="0 0 2546 1249"><path transform="translate(1977.00 912.90) rotate(32.4)" d="M2.7 -.2 V9.0 A2.15 2.15 0 0 0 7.0 9.0 V-6.4 A3.5 3.5 0 0 0 0 -6.4 V12.5 A4.45 4.45 0 0 0 8.9 12.5 V-3.2" fill="none" stroke="#3d3a33" stroke-width="1.45" stroke-linecap="round"/></svg>
<svg style="left:2199.10px;top:908.05px" width="28" height="21" viewBox="0 0 28 21"><rect x=".7" y=".7" width="26.2" height="19.3" rx="2.6" fill="#fff" stroke="#0c0c0c" stroke-width="1.4"/><path d="M1.4 1.4 L12.4 11 Q13.8 12.2 15.2 11 L26.2 1.4 M1.4 19.4 L11.4 10.5 M26.2 19.4 L16.2 10.5" fill="none" stroke="#0c0c0c" stroke-width="1.15"/></svg>
<div class="cb" style="left:515.2px;top:939.10px"></div>
<svg style="left:565.20px;top:938.20px" width="24" height="26" viewBox="0 0 24 26"><path d="M9.3 .8 H18.3 L22.9 5.4 V18.4 a1.5 1.5 0 0 1 -1.5 1.5 H9.3 a1.5 1.5 0 0 1 -1.5 -1.5 V2.3 a1.5 1.5 0 0 1 1.5 -1.5Z" fill="rgba(255,255,255,.82)" stroke="#1f1f1f" stroke-width="1.5" stroke-linejoin="round"/><path d="M18.1 1 V4.1 a1.4 1.4 0 0 0 1.4 1.4 H22.7" fill="none" stroke="#1f1f1f" stroke-width="1.1"/><path d="M2.3 5.5 H11.3 L16 10.2 V23.3 a1.5 1.5 0 0 1 -1.5 1.5 H2.3 a1.5 1.5 0 0 1 -1.5 -1.5 V7 a1.5 1.5 0 0 1 1.5 -1.5Z" fill="#fdfaf2" stroke="#1f1f1f" stroke-width="1.6" stroke-linejoin="round"/><path d="M11.1 5.7 V8.9 a1.4 1.4 0 0 0 1.4 1.4 H15.8" fill="none" stroke="#1f1f1f" stroke-width="1.1"/></svg>
<svg style="left:662.00px;top:938.00px" width="27" height="26" viewBox="0 0 27 26"><path d="M6.9 5.4 V2.9 a1.5 1.5 0 0 1 1.5 -1.5 H16.2 L21 6.2 V12.6 H12 Z" fill="rgba(255,255,255,.85)" stroke="none"/><path d="M6.9 5.2 V2.9 a1.5 1.5 0 0 1 1.5 -1.5 H16.2 L21 6.2 V12.6" fill="none" stroke="#3a3a3a" stroke-width="1.4"/><path d="M16 1.6 V4.9 a1.4 1.4 0 0 0 1.4 1.4 H20.8" fill="none" stroke="#3a3a3a" stroke-width="1"/><path d="M10.4 24.1 H2.3 a1.5 1.5 0 0 1 -1.5 -1.5 V7.3 a1.5 1.5 0 0 1 1.5 -1.5 H10.4 L14.8 10.2 V13 L10.4 18 Z" fill="#fffdfb" stroke="none"/><path d="M10.2 24.1 H2.3 a1.5 1.5 0 0 1 -1.5 -1.5 V7.3 a1.5 1.5 0 0 1 1.5 -1.5 H10.4 L14.8 10.2 V12.2" fill="none" stroke="#ec1c24" stroke-width="1.5"/><path d="M10.3 6 V8.9 a1.4 1.4 0 0 0 1.4 1.4 H14.6" fill="none" stroke="#ec1c24" stroke-width="1.1"/><path d="M10.7 18.4 L17.9 12.7 V16.2 C22.4 16.4 25.8 19.2 26.1 25.4 C24.2 21.8 21.6 20.6 17.9 20.6 V24.1Z" fill="#111"/></svg>
<div class="c ref" style="left:758.7px;top:940px">INV000333</div>
<div class="c" style="left:1016.3px;top:940px">22 Aug 2023</div>
<div class="c" style="left:1226.1px;top:940px">Biomatic Choice</div>
<svg style="left:1789.00px;top:940.00px" width="26" height="24" viewBox="0 0 26 24"><path d="M3.2 1 H21.9 a2.2 2.2 0 0 1 2.2 2.2 V12.5 a2.2 2.2 0 0 1 -2.2 2.2 H19 V20.7 L12.9 14.7 H3.2 a2.2 2.2 0 0 1 -2.2 -2.2 V3.2 a2.2 2.2 0 0 1 2.2 -2.2Z" fill="#fefad0" stroke="#15130f" stroke-width="1.85" stroke-linejoin="miter"/></svg>
<svg style="left:0;top:0" width="2546" height="1249" viewBox="0 0 2546 1249"><path transform="translate(1977.00 945.40) rotate(32.4)" d="M2.7 -.2 V9.0 A2.15 2.15 0 0 0 7.0 9.0 V-6.4 A3.5 3.5 0 0 0 0 -6.4 V12.5 A4.45 4.45 0 0 0 8.9 12.5 V-3.2" fill="none" stroke="#3d3a33" stroke-width="1.45" stroke-linecap="round"/></svg>
<svg style="left:2199.10px;top:941.05px" width="28" height="21" viewBox="0 0 28 21"><rect x=".7" y=".7" width="26.2" height="19.3" rx="2.6" fill="#fff" stroke="#0c0c0c" stroke-width="1.4"/><path d="M1.4 1.4 L12.4 11 Q13.8 12.2 15.2 11 L26.2 1.4 M1.4 19.4 L11.4 10.5 M26.2 19.4 L16.2 10.5" fill="none" stroke="#0c0c0c" stroke-width="1.15"/></svg>
<div class="cb" style="left:515.2px;top:971.10px"></div>
<svg style="left:565.20px;top:970.20px" width="24" height="26" viewBox="0 0 24 26"><path d="M9.3 .8 H18.3 L22.9 5.4 V18.4 a1.5 1.5 0 0 1 -1.5 1.5 H9.3 a1.5 1.5 0 0 1 -1.5 -1.5 V2.3 a1.5 1.5 0 0 1 1.5 -1.5Z" fill="rgba(255,255,255,.82)" stroke="#1f1f1f" stroke-width="1.5" stroke-linejoin="round"/><path d="M18.1 1 V4.1 a1.4 1.4 0 0 0 1.4 1.4 H22.7" fill="none" stroke="#1f1f1f" stroke-width="1.1"/><path d="M2.3 5.5 H11.3 L16 10.2 V23.3 a1.5 1.5 0 0 1 -1.5 1.5 H2.3 a1.5 1.5 0 0 1 -1.5 -1.5 V7 a1.5 1.5 0 0 1 1.5 -1.5Z" fill="#fdfaf2" stroke="#1f1f1f" stroke-width="1.6" stroke-linejoin="round"/><path d="M11.1 5.7 V8.9 a1.4 1.4 0 0 0 1.4 1.4 H15.8" fill="none" stroke="#1f1f1f" stroke-width="1.1"/></svg>
<svg style="left:662.00px;top:970.00px" width="27" height="26" viewBox="0 0 27 26"><path d="M6.9 5.4 V2.9 a1.5 1.5 0 0 1 1.5 -1.5 H16.2 L21 6.2 V12.6 H12 Z" fill="rgba(255,255,255,.85)" stroke="none"/><path d="M6.9 5.2 V2.9 a1.5 1.5 0 0 1 1.5 -1.5 H16.2 L21 6.2 V12.6" fill="none" stroke="#3a3a3a" stroke-width="1.4"/><path d="M16 1.6 V4.9 a1.4 1.4 0 0 0 1.4 1.4 H20.8" fill="none" stroke="#3a3a3a" stroke-width="1"/><path d="M10.4 24.1 H2.3 a1.5 1.5 0 0 1 -1.5 -1.5 V7.3 a1.5 1.5 0 0 1 1.5 -1.5 H10.4 L14.8 10.2 V13 L10.4 18 Z" fill="#fffdfb" stroke="none"/><path d="M10.2 24.1 H2.3 a1.5 1.5 0 0 1 -1.5 -1.5 V7.3 a1.5 1.5 0 0 1 1.5 -1.5 H10.4 L14.8 10.2 V12.2" fill="none" stroke="#ec1c24" stroke-width="1.5"/><path d="M10.3 6 V8.9 a1.4 1.4 0 0 0 1.4 1.4 H14.6" fill="none" stroke="#ec1c24" stroke-width="1.1"/><path d="M10.7 18.4 L17.9 12.7 V16.2 C22.4 16.4 25.8 19.2 26.1 25.4 C24.2 21.8 21.6 20.6 17.9 20.6 V24.1Z" fill="#111"/></svg>
<div class="c ref" style="left:758.7px;top:973px">INV000334</div>
<div class="c" style="left:1016.3px;top:973px">22 Aug 2023</div>
<div class="c" style="left:1226.1px;top:973px">Biomatic Choice</div>
<svg style="left:1789.00px;top:972.00px" width="26" height="24" viewBox="0 0 26 24"><path d="M3.2 1 H21.9 a2.2 2.2 0 0 1 2.2 2.2 V12.5 a2.2 2.2 0 0 1 -2.2 2.2 H19 V20.7 L12.9 14.7 H3.2 a2.2 2.2 0 0 1 -2.2 -2.2 V3.2 a2.2 2.2 0 0 1 2.2 -2.2Z" fill="#fefad0" stroke="#15130f" stroke-width="1.85" stroke-linejoin="miter"/></svg>
<svg style="left:0;top:0" width="2546" height="1249" viewBox="0 0 2546 1249"><path transform="translate(1977.00 977.90) rotate(32.4)" d="M2.7 -.2 V9.0 A2.15 2.15 0 0 0 7.0 9.0 V-6.4 A3.5 3.5 0 0 0 0 -6.4 V12.5 A4.45 4.45 0 0 0 8.9 12.5 V-3.2" fill="none" stroke="#3d3a33" stroke-width="1.45" stroke-linecap="round"/></svg>
<svg style="left:2199.10px;top:973.05px" width="28" height="21" viewBox="0 0 28 21"><rect x=".7" y=".7" width="26.2" height="19.3" rx="2.6" fill="#fff" stroke="#0c0c0c" stroke-width="1.4"/><path d="M1.4 1.4 L12.4 11 Q13.8 12.2 15.2 11 L26.2 1.4 M1.4 19.4 L11.4 10.5 M26.2 19.4 L16.2 10.5" fill="none" stroke="#0c0c0c" stroke-width="1.15"/></svg>
<div class="cb" style="left:515.2px;top:1004.10px"></div>
<svg style="left:565.20px;top:1003.20px" width="24" height="26" viewBox="0 0 24 26"><path d="M9.3 .8 H18.3 L22.9 5.4 V18.4 a1.5 1.5 0 0 1 -1.5 1.5 H9.3 a1.5 1.5 0 0 1 -1.5 -1.5 V2.3 a1.5 1.5 0 0 1 1.5 -1.5Z" fill="rgba(255,255,255,.82)" stroke="#1f1f1f" stroke-width="1.5" stroke-linejoin="round"/><path d="M18.1 1 V4.1 a1.4 1.4 0 0 0 1.4 1.4 H22.7" fill="none" stroke="#1f1f1f" stroke-width="1.1"/><path d="M2.3 5.5 H11.3 L16 10.2 V23.3 a1.5 1.5 0 0 1 -1.5 1.5 H2.3 a1.5 1.5 0 0 1 -1.5 -1.5 V7 a1.5 1.5 0 0 1 1.5 -1.5Z" fill="#fdfaf2" stroke="#1f1f1f" stroke-width="1.6" stroke-linejoin="round"/><path d="M11.1 5.7 V8.9 a1.4 1.4 0 0 0 1.4 1.4 H15.8" fill="none" stroke="#1f1f1f" stroke-width="1.1"/></svg>
<svg style="left:662.00px;top:1003.00px" width="27" height="26" viewBox="0 0 27 26"><path d="M6.9 5.4 V2.9 a1.5 1.5 0 0 1 1.5 -1.5 H16.2 L21 6.2 V12.6 H12 Z" fill="rgba(255,255,255,.85)" stroke="none"/><path d="M6.9 5.2 V2.9 a1.5 1.5 0 0 1 1.5 -1.5 H16.2 L21 6.2 V12.6" fill="none" stroke="#3a3a3a" stroke-width="1.4"/><path d="M16 1.6 V4.9 a1.4 1.4 0 0 0 1.4 1.4 H20.8" fill="none" stroke="#3a3a3a" stroke-width="1"/><path d="M10.4 24.1 H2.3 a1.5 1.5 0 0 1 -1.5 -1.5 V7.3 a1.5 1.5 0 0 1 1.5 -1.5 H10.4 L14.8 10.2 V13 L10.4 18 Z" fill="#fffdfb" stroke="none"/><path d="M10.2 24.1 H2.3 a1.5 1.5 0 0 1 -1.5 -1.5 V7.3 a1.5 1.5 0 0 1 1.5 -1.5 H10.4 L14.8 10.2 V12.2" fill="none" stroke="#ec1c24" stroke-width="1.5"/><path d="M10.3 6 V8.9 a1.4 1.4 0 0 0 1.4 1.4 H14.6" fill="none" stroke="#ec1c24" stroke-width="1.1"/><path d="M10.7 18.4 L17.9 12.7 V16.2 C22.4 16.4 25.8 19.2 26.1 25.4 C24.2 21.8 21.6 20.6 17.9 20.6 V24.1Z" fill="#111"/></svg>
<div class="c ref" style="left:758.7px;top:1005px">INV000335</div>
<div class="c" style="left:1016.3px;top:1005px">22 Aug 2023</div>
<div class="c" style="left:1226.1px;top:1005px">Biomatic Choice</div>
<svg style="left:1789.00px;top:1005.00px" width="26" height="24" viewBox="0 0 26 24"><path d="M3.2 1 H21.9 a2.2 2.2 0 0 1 2.2 2.2 V12.5 a2.2 2.2 0 0 1 -2.2 2.2 H19 V20.7 L12.9 14.7 H3.2 a2.2 2.2 0 0 1 -2.2 -2.2 V3.2 a2.2 2.2 0 0 1 2.2 -2.2Z" fill="#fefad0" stroke="#15130f" stroke-width="1.85" stroke-linejoin="miter"/></svg>
<svg style="left:0;top:0" width="2546" height="1249" viewBox="0 0 2546 1249"><path transform="translate(1977.00 1010.40) rotate(32.4)" d="M2.7 -.2 V9.0 A2.15 2.15 0 0 0 7.0 9.0 V-6.4 A3.5 3.5 0 0 0 0 -6.4 V12.5 A4.45 4.45 0 0 0 8.9 12.5 V-3.2" fill="none" stroke="#3d3a33" stroke-width="1.45" stroke-linecap="round"/></svg>
<svg style="left:2199.10px;top:1006.05px" width="28" height="21" viewBox="0 0 28 21"><rect x=".7" y=".7" width="26.2" height="19.3" rx="2.6" fill="#fff" stroke="#0c0c0c" stroke-width="1.4"/><path d="M1.4 1.4 L12.4 11 Q13.8 12.2 15.2 11 L26.2 1.4 M1.4 19.4 L11.4 10.5 M26.2 19.4 L16.2 10.5" fill="none" stroke="#0c0c0c" stroke-width="1.15"/></svg>
<div class="cb" style="left:515.2px;top:1036.10px"></div>
<svg style="left:565.20px;top:1035.20px" width="24" height="26" viewBox="0 0 24 26"><path d="M9.3 .8 H18.3 L22.9 5.4 V18.4 a1.5 1.5 0 0 1 -1.5 1.5 H9.3 a1.5 1.5 0 0 1 -1.5 -1.5 V2.3 a1.5 1.5 0 0 1 1.5 -1.5Z" fill="rgba(255,255,255,.82)" stroke="#1f1f1f" stroke-width="1.5" stroke-linejoin="round"/><path d="M18.1 1 V4.1 a1.4 1.4 0 0 0 1.4 1.4 H22.7" fill="none" stroke="#1f1f1f" stroke-width="1.1"/><path d="M2.3 5.5 H11.3 L16 10.2 V23.3 a1.5 1.5 0 0 1 -1.5 1.5 H2.3 a1.5 1.5 0 0 1 -1.5 -1.5 V7 a1.5 1.5 0 0 1 1.5 -1.5Z" fill="#fdfaf2" stroke="#1f1f1f" stroke-width="1.6" stroke-linejoin="round"/><path d="M11.1 5.7 V8.9 a1.4 1.4 0 0 0 1.4 1.4 H15.8" fill="none" stroke="#1f1f1f" stroke-width="1.1"/></svg>
<svg style="left:662.00px;top:1035.00px" width="27" height="26" viewBox="0 0 27 26"><path d="M6.9 5.4 V2.9 a1.5 1.5 0 0 1 1.5 -1.5 H16.2 L21 6.2 V12.6 H12 Z" fill="rgba(255,255,255,.85)" stroke="none"/><path d="M6.9 5.2 V2.9 a1.5 1.5 0 0 1 1.5 -1.5 H16.2 L21 6.2 V12.6" fill="none" stroke="#3a3a3a" stroke-width="1.4"/><path d="M16 1.6 V4.9 a1.4 1.4 0 0 0 1.4 1.4 H20.8" fill="none" stroke="#3a3a3a" stroke-width="1"/><path d="M10.4 24.1 H2.3 a1.5 1.5 0 0 1 -1.5 -1.5 V7.3 a1.5 1.5 0 0 1 1.5 -1.5 H10.4 L14.8 10.2 V13 L10.4 18 Z" fill="#fffdfb" stroke="none"/><path d="M10.2 24.1 H2.3 a1.5 1.5 0 0 1 -1.5 -1.5 V7.3 a1.5 1.5 0 0 1 1.5 -1.5 H10.4 L14.8 10.2 V12.2" fill="none" stroke="#ec1c24" stroke-width="1.5"/><path d="M10.3 6 V8.9 a1.4 1.4 0 0 0 1.4 1.4 H14.6" fill="none" stroke="#ec1c24" stroke-width="1.1"/><path d="M10.7 18.4 L17.9 12.7 V16.2 C22.4 16.4 25.8 19.2 26.1 25.4 C24.2 21.8 21.6 20.6 17.9 20.6 V24.1Z" fill="#111"/></svg>
<div class="c ref" style="left:758.7px;top:1038px">INV000326</div>
<div class="c" style="left:1016.3px;top:1038px">15 Aug 2023</div>
<div class="c" style="left:1226.1px;top:1038px">Reath Financials</div>
<svg style="left:1789.00px;top:1037.00px" width="26" height="24" viewBox="0 0 26 24"><path d="M3.2 1 H21.9 a2.2 2.2 0 0 1 2.2 2.2 V12.5 a2.2 2.2 0 0 1 -2.2 2.2 H19 V20.7 L12.9 14.7 H3.2 a2.2 2.2 0 0 1 -2.2 -2.2 V3.2 a2.2 2.2 0 0 1 2.2 -2.2Z" fill="#fefad0" stroke="#15130f" stroke-width="1.85" stroke-linejoin="miter"/></svg>
<svg style="left:0;top:0" width="2546" height="1249" viewBox="0 0 2546 1249"><path transform="translate(1977.00 1042.90) rotate(32.4)" d="M2.7 -.2 V9.0 A2.15 2.15 0 0 0 7.0 9.0 V-6.4 A3.5 3.5 0 0 0 0 -6.4 V12.5 A4.45 4.45 0 0 0 8.9 12.5 V-3.2" fill="none" stroke="#3d3a33" stroke-width="1.45" stroke-linecap="round"/></svg>
<svg style="left:2153.10px;top:1035.00px" width="22" height="29" viewBox="0 0 22 29"><path d="M2.7 .7 H15.6 L21.1 6.4 V25.4 a2 2 0 0 1 -2 2 H2.7 a2 2 0 0 1 -2 -2 V2.7 a2 2 0 0 1 2 -2Z" fill="#fff" stroke="#141414" stroke-width="1.3" stroke-linejoin="round"/><path d="M15.2 1 V4.8 a1.7 1.7 0 0 0 1.7 1.7 H20.9" fill="none" stroke="#141414" stroke-width="1.1"/><path d="M3.4 7.6 H10.5 M3.4 10.7 H18.6 M3.6 13.9 H18.8 M3.4 17.2 H18 M3.4 20.3 H15.2" stroke="#6a6a6a" stroke-width="1.35" stroke-linecap="round"/></svg>
<div class="cb" style="left:515.2px;top:1070.10px"></div>
<svg style="left:565.20px;top:1069.20px" width="24" height="26" viewBox="0 0 24 26"><path d="M9.3 .8 H18.3 L22.9 5.4 V18.4 a1.5 1.5 0 0 1 -1.5 1.5 H9.3 a1.5 1.5 0 0 1 -1.5 -1.5 V2.3 a1.5 1.5 0 0 1 1.5 -1.5Z" fill="rgba(255,255,255,.82)" stroke="#1f1f1f" stroke-width="1.5" stroke-linejoin="round"/><path d="M18.1 1 V4.1 a1.4 1.4 0 0 0 1.4 1.4 H22.7" fill="none" stroke="#1f1f1f" stroke-width="1.1"/><path d="M2.3 5.5 H11.3 L16 10.2 V23.3 a1.5 1.5 0 0 1 -1.5 1.5 H2.3 a1.5 1.5 0 0 1 -1.5 -1.5 V7 a1.5 1.5 0 0 1 1.5 -1.5Z" fill="#fdfaf2" stroke="#1f1f1f" stroke-width="1.6" stroke-linejoin="round"/><path d="M11.1 5.7 V8.9 a1.4 1.4 0 0 0 1.4 1.4 H15.8" fill="none" stroke="#1f1f1f" stroke-width="1.1"/></svg>
<svg style="left:662.00px;top:1069.00px" width="27" height="26" viewBox="0 0 27 26"><path d="M6.9 5.4 V2.9 a1.5 1.5 0 0 1 1.5 -1.5 H16.2 L21 6.2 V12.6 H12 Z" fill="rgba(255,255,255,.85)" stroke="none"/><path d="M6.9 5.2 V2.9 a1.5 1.5 0 0 1 1.5 -1.5 H16.2 L21 6.2 V12.6" fill="none" stroke="#3a3a3a" stroke-width="1.4"/><path d="M16 1.6 V4.9 a1.4 1.4 0 0 0 1.4 1.4 H20.8" fill="none" stroke="#3a3a3a" stroke-width="1"/><path d="M10.4 24.1 H2.3 a1.5 1.5 0 0 1 -1.5 -1.5 V7.3 a1.5 1.5 0 0 1 1.5 -1.5 H10.4 L14.8 10.2 V13 L10.4 18 Z" fill="#fffdfb" stroke="none"/><path d="M10.2 24.1 H2.3 a1.5 1.5 0 0 1 -1.5 -1.5 V7.3 a1.5 1.5 0 0 1 1.5 -1.5 H10.4 L14.8 10.2 V12.2" fill="none" stroke="#ec1c24" stroke-width="1.5"/><path d="M10.3 6 V8.9 a1.4 1.4 0 0 0 1.4 1.4 H14.6" fill="none" stroke="#ec1c24" stroke-width="1.1"/><path d="M10.7 18.4 L17.9 12.7 V16.2 C22.4 16.4 25.8 19.2 26.1 25.4 C24.2 21.8 21.6 20.6 17.9 20.6 V24.1Z" fill="#111"/></svg>
<div class="c ref" style="left:758.7px;top:1072px">INV000327</div>
<div class="c" style="left:1016.3px;top:1072px">15 Aug 2023</div>
<div class="c" style="left:1226.1px;top:1072px">Canford Services</div>
<div class="c" style="right:773.70px;top:1072px">4,812.00</div>
<svg style="left:1789.00px;top:1071.00px" width="26" height="24" viewBox="0 0 26 24"><path d="M3.2 1 H21.9 a2.2 2.2 0 0 1 2.2 2.2 V12.5 a2.2 2.2 0 0 1 -2.2 2.2 H19 V20.7 L12.9 14.7 H3.2 a2.2 2.2 0 0 1 -2.2 -2.2 V3.2 a2.2 2.2 0 0 1 2.2 -2.2Z" fill="#fefad0" stroke="#15130f" stroke-width="1.85" stroke-linejoin="miter"/></svg>
<svg style="left:0;top:0" width="2546" height="1249" viewBox="0 0 2546 1249"><path transform="translate(1977.00 1076.90) rotate(32.4)" d="M2.7 -.2 V9.0 A2.15 2.15 0 0 0 7.0 9.0 V-6.4 A3.5 3.5 0 0 0 0 -6.4 V12.5 A4.45 4.45 0 0 0 8.9 12.5 V-3.2" fill="none" stroke="#3d3a33" stroke-width="1.45" stroke-linecap="round"/></svg>
<svg style="left:2153.10px;top:1069.00px" width="22" height="29" viewBox="0 0 22 29"><path d="M2.7 .7 H15.6 L21.1 6.4 V25.4 a2 2 0 0 1 -2 2 H2.7 a2 2 0 0 1 -2 -2 V2.7 a2 2 0 0 1 2 -2Z" fill="#fff" stroke="#141414" stroke-width="1.3" stroke-linejoin="round"/><path d="M15.2 1 V4.8 a1.7 1.7 0 0 0 1.7 1.7 H20.9" fill="none" stroke="#141414" stroke-width="1.1"/><path d="M3.4 7.6 H10.5 M3.4 10.7 H18.6 M3.6 13.9 H18.8 M3.4 17.2 H18 M3.4 20.3 H15.2" stroke="#6a6a6a" stroke-width="1.35" stroke-linecap="round"/></svg>
<div class="cb" style="left:515.2px;top:1104.10px"></div>
<svg style="left:565.20px;top:1103.20px" width="24" height="26" viewBox="0 0 24 26"><path d="M9.3 .8 H18.3 L22.9 5.4 V18.4 a1.5 1.5 0 0 1 -1.5 1.5 H9.3 a1.5 1.5 0 0 1 -1.5 -1.5 V2.3 a1.5 1.5 0 0 1 1.5 -1.5Z" fill="rgba(255,255,255,.82)" stroke="#1f1f1f" stroke-width="1.5" stroke-linejoin="round"/><path d="M18.1 1 V4.1 a1.4 1.4 0 0 0 1.4 1.4 H22.7" fill="none" stroke="#1f1f1f" stroke-width="1.1"/><path d="M2.3 5.5 H11.3 L16 10.2 V23.3 a1.5 1.5 0 0 1 -1.5 1.5 H2.3 a1.5 1.5 0 0 1 -1.5 -1.5 V7 a1.5 1.5 0 0 1 1.5 -1.5Z" fill="#fdfaf2" stroke="#1f1f1f" stroke-width="1.6" stroke-linejoin="round"/><path d="M11.1 5.7 V8.9 a1.4 1.4 0 0 0 1.4 1.4 H15.8" fill="none" stroke="#1f1f1f" stroke-width="1.1"/></svg>
<svg style="left:662.00px;top:1103.00px" width="27" height="26" viewBox="0 0 27 26"><path d="M6.9 5.4 V2.9 a1.5 1.5 0 0 1 1.5 -1.5 H16.2 L21 6.2 V12.6 H12 Z" fill="rgba(255,255,255,.85)" stroke="none"/><path d="M6.9 5.2 V2.9 a1.5 1.5 0 0 1 1.5 -1.5 H16.2 L21 6.2 V12.6" fill="none" stroke="#3a3a3a" stroke-width="1.4"/><path d="M16 1.6 V4.9 a1.4 1.4 0 0 0 1.4 1.4 H20.8" fill="none" stroke="#3a3a3a" stroke-width="1"/><path d="M10.4 24.1 H2.3 a1.5 1.5 0 0 1 -1.5 -1.5 V7.3 a1.5 1.5 0 0 1 1.5 -1.5 H10.4 L14.8 10.2 V13 L10.4 18 Z" fill="#fffdfb" stroke="none"/><path d="M10.2 24.1 H2.3 a1.5 1.5 0 0 1 -1.5 -1.5 V7.3 a1.5 1.5 0 0 1 1.5 -1.5 H10.4 L14.8 10.2 V12.2" fill="none" stroke="#ec1c24" stroke-width="1.5"/><path d="M10.3 6 V8.9 a1.4 1.4 0 0 0 1.4 1.4 H14.6" fill="none" stroke="#ec1c24" stroke-width="1.1"/><path d="M10.7 18.4 L17.9 12.7 V16.2 C22.4 16.4 25.8 19.2 26.1 25.4 C24.2 21.8 21.6 20.6 17.9 20.6 V24.1Z" fill="#111"/></svg>
<div class="c ref" style="left:758.7px;top:1106px">INV000322</div>
<div class="c" style="left:1016.3px;top:1106px">02 Aug 2023</div>
<div class="c" style="left:1226.1px;top:1106px">Biomatic Choice</div>
<svg style="left:1789.00px;top:1105.00px" width="26" height="24" viewBox="0 0 26 24"><path d="M3.2 1 H21.9 a2.2 2.2 0 0 1 2.2 2.2 V12.5 a2.2 2.2 0 0 1 -2.2 2.2 H19 V20.7 L12.9 14.7 H3.2 a2.2 2.2 0 0 1 -2.2 -2.2 V3.2 a2.2 2.2 0 0 1 2.2 -2.2Z" fill="#fefad0" stroke="#15130f" stroke-width="1.85" stroke-linejoin="miter"/></svg>
<svg style="left:0;top:0" width="2546" height="1249" viewBox="0 0 2546 1249"><path transform="translate(1977.00 1110.90) rotate(32.4)" d="M2.7 -.2 V9.0 A2.15 2.15 0 0 0 7.0 9.0 V-6.4 A3.5 3.5 0 0 0 0 -6.4 V12.5 A4.45 4.45 0 0 0 8.9 12.5 V-3.2" fill="none" stroke="#3d3a33" stroke-width="1.45" stroke-linecap="round"/></svg>
<svg style="left:2153.10px;top:1103.00px" width="22" height="29" viewBox="0 0 22 29"><path d="M2.7 .7 H15.6 L21.1 6.4 V25.4 a2 2 0 0 1 -2 2 H2.7 a2 2 0 0 1 -2 -2 V2.7 a2 2 0 0 1 2 -2Z" fill="#fff" stroke="#141414" stroke-width="1.3" stroke-linejoin="round"/><path d="M15.2 1 V4.8 a1.7 1.7 0 0 0 1.7 1.7 H20.9" fill="none" stroke="#141414" stroke-width="1.1"/><path d="M3.4 7.6 H10.5 M3.4 10.7 H18.6 M3.6 13.9 H18.8 M3.4 17.2 H18 M3.4 20.3 H15.2" stroke="#6a6a6a" stroke-width="1.35" stroke-linecap="round"/></svg>
<svg style="left:2199.10px;top:1106.05px" width="28" height="21" viewBox="0 0 28 21"><rect x=".7" y=".7" width="26.2" height="19.3" rx="2.6" fill="#fff" stroke="#0c0c0c" stroke-width="1.4"/><path d="M1.4 1.4 L12.4 11 Q13.8 12.2 15.2 11 L26.2 1.4 M1.4 19.4 L11.4 10.5 M26.2 19.4 L16.2 10.5" fill="none" stroke="#0c0c0c" stroke-width="1.15"/></svg>
<div class="btn d" style="left:688px;width:149px"></div>
<div class="btn d" style="left:854px;width:148px"></div>
<div class="btn" style="left:1209px;width:149px"></div>
<div class="btn" style="left:1387px;width:148px"></div>
<div class="btn" style="left:1742px;width:149px"></div>
<svg style="left:0;top:0" width="2546" height="1249" viewBox="0 0 2546 1249"><rect x="755.7" y="1188.3" width="3.9" height="16" fill="#fff"/><path d="M770.2 1188.4 V1204.3 L761.3 1196.35Z" fill="#fff"/><path d="M934.6 1188.6 V1204.3 L926.3 1196.45Z" fill="#fff"/><path d="M1276.3 1188.6 V1204.3 L1284.8 1196.45Z" fill="#fff"/><path d="M1453.8 1188.4 V1204.3 L1462.5 1196.35Z" fill="#fff"/><rect x="1463.9" y="1188.3" width="3.9" height="16" fill="#fff"/></svg>
<div class="t" style="left:1031.5px;top:1188.00px;color:#111">Page 1 of 2</div>
<div class="abs" style="left:1564px;top:1181px;width:131px;height:35.5px;background:#f2f8fd;border:1px solid #c9cdd3;border-radius:5px;box-shadow:0 1px 2px rgba(0,0,0,.2)"></div>
<div class="t" style="right:856.50px;top:1188.00px;color:#0a0a46">1</div>
<div class="t w b" style="left:1787px;top:1185.00px;">Go To</div>
</body></html>
